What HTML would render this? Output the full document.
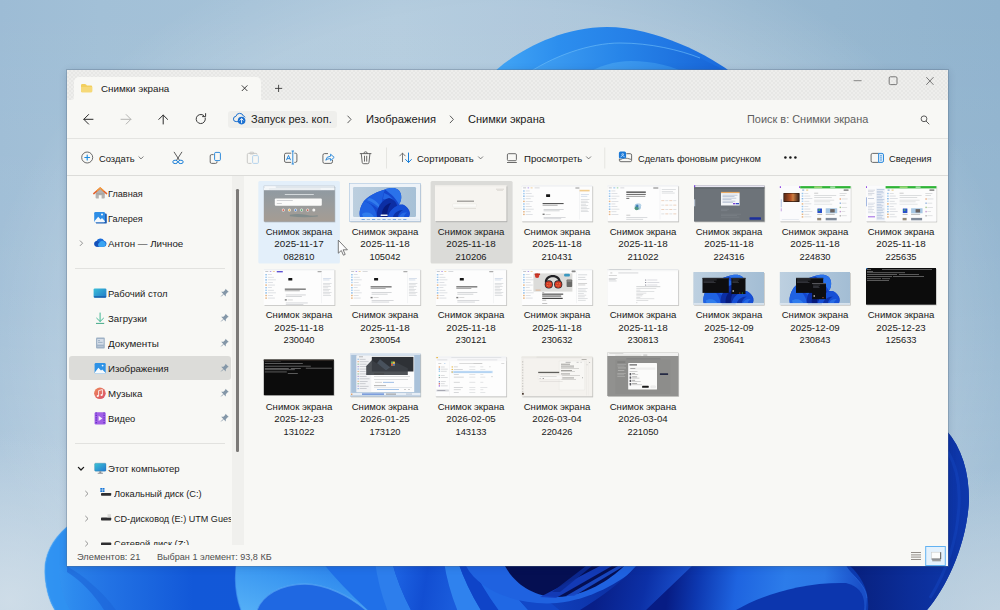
<!DOCTYPE html>
<html lang="ru"><head><meta charset="utf-8"><title>Снимки экрана</title>
<style>
html,body{margin:0;padding:0;}
body{width:1000px;height:610px;overflow:hidden;position:relative;background:#a9c3d8;font-family:"Liberation Sans",sans-serif;}
.a{position:absolute;}
.t{position:absolute;white-space:nowrap;}
.ti{display:inline-block;white-space:nowrap;transform-origin:50% 50%;}
svg{position:absolute;overflow:visible;}
#win{position:absolute;left:67px;top:70px;width:881px;height:496px;background:#f8f8f5;box-shadow:0 0 0 1px rgba(90,110,130,.32),0 1px 8px rgba(0,30,70,.16);overflow:hidden;}
</style></head><body>
<svg id="wall" width="1000" height="610" viewBox="0 0 1000 610" style="left:0;top:0">
<defs>
<linearGradient id="bg" x1="0" y1="0" x2="1" y2="0"><stop offset="0" stop-color="#9dbcd5"/><stop offset=".1" stop-color="#a2c0d7"/><stop offset=".4" stop-color="#a8c4d9"/><stop offset=".55" stop-color="#a2bfd6"/><stop offset=".75" stop-color="#99b9d1"/><stop offset="1" stop-color="#90b3ce"/></linearGradient><radialGradient id="glow" gradientUnits="userSpaceOnUse" cx="500" cy="340" r="520" gradientTransform="translate(0 340) scale(1 .8) translate(0 -340)"><stop offset="0" stop-color="#fff" stop-opacity=".15"/><stop offset=".8" stop-color="#fff" stop-opacity=".15"/><stop offset="1" stop-color="#fff" stop-opacity="0"/></radialGradient><linearGradient id="bgv" x1="0" y1="0" x2="0" y2="1"><stop offset="0" stop-color="#fff" stop-opacity="0"/><stop offset=".5" stop-color="#fff" stop-opacity=".07"/><stop offset="1" stop-color="#fff" stop-opacity=".27"/></linearGradient>
<radialGradient id="bgl" gradientUnits="userSpaceOnUse" cx="10" cy="600" r="170"><stop offset="0" stop-color="#d2dfe9" stop-opacity=".85"/><stop offset=".5" stop-color="#d2dfe9" stop-opacity=".4"/><stop offset="1" stop-color="#d2dfe9" stop-opacity="0"/></radialGradient>
<radialGradient id="bgr" gradientUnits="userSpaceOnUse" cx="1000" cy="620" r="150"><stop offset="0" stop-color="#c6d6e3" stop-opacity=".8"/><stop offset=".5" stop-color="#c6d6e3" stop-opacity=".4"/><stop offset="1" stop-color="#c6d6e3" stop-opacity="0"/></radialGradient>
<linearGradient id="ta" x1="0" y1="0" x2="1" y2="0"><stop offset="0" stop-color="#45a8f6"/><stop offset=".28" stop-color="#2c8eee"/><stop offset="1" stop-color="#1a6ade"/></linearGradient>
<linearGradient id="tb" x1="0" y1="0" x2="1" y2="0"><stop offset="0" stop-color="#43a3f3"/><stop offset=".45" stop-color="#2785e9"/><stop offset="1" stop-color="#1661d6"/></linearGradient>
<linearGradient id="tc" x1="0" y1="0" x2="1" y2="0"><stop offset="0" stop-color="#46a4f2"/><stop offset="1" stop-color="#2a84e6"/></linearGradient>
<linearGradient id="bot" x1="0" y1="0" x2="1" y2="0"><stop offset="0" stop-color="#2f8aec"/><stop offset=".07" stop-color="#2272e4"/><stop offset=".16" stop-color="#1258d8"/><stop offset=".3" stop-color="#1358d8"/><stop offset=".48" stop-color="#154fd0"/><stop offset=".62" stop-color="#0b2fa4"/><stop offset=".72" stop-color="#1146c4"/><stop offset=".88" stop-color="#0c3ab0"/><stop offset="1" stop-color="#0a2e9e"/></linearGradient>
<linearGradient id="lp" x1="0" y1="0" x2="1" y2="0"><stop offset="0" stop-color="#379af4"/><stop offset=".4" stop-color="#2d8aee"/><stop offset="1" stop-color="#2478e8"/></linearGradient>
<linearGradient id="wv" x1="0" y1="1" x2="1" y2="0"><stop offset="0" stop-color="#55b0f7"/><stop offset=".5" stop-color="#3b98f1"/><stop offset="1" stop-color="#2478e8"/></linearGradient>
<linearGradient id="rp" x1="0" y1="0" x2="1" y2="0"><stop offset="0" stop-color="#08207e"/><stop offset=".5" stop-color="#0b2d98"/><stop offset="1" stop-color="#0e38ac"/></linearGradient>
<linearGradient id="pt" gradientUnits="userSpaceOnUse" x1="670" y1="575" x2="860" y2="600"><stop offset="0" stop-color="#071c84"/><stop offset=".15" stop-color="#0d38b0"/><stop offset=".35" stop-color="#1e64e0"/><stop offset=".6" stop-color="#2c7cea"/><stop offset=".8" stop-color="#2c78e6"/><stop offset=".93" stop-color="#1f5cd2"/><stop offset="1" stop-color="#194ec6"/></linearGradient><linearGradient id="bandB" gradientUnits="userSpaceOnUse" x1="395" y1="580" x2="455" y2="590"><stop offset="0" stop-color="#1c62e2"/><stop offset=".5" stop-color="#124ed2"/><stop offset="1" stop-color="#1a5cdc"/></linearGradient><linearGradient id="bandA" gradientUnits="userSpaceOnUse" x1="600" y1="580" x2="680" y2="600"><stop offset="0" stop-color="#081f88"/><stop offset=".55" stop-color="#0c30a6"/><stop offset="1" stop-color="#1a50cc"/></linearGradient>
<clipPath id="wclip"><path d="M0 0H1000V610H0Z"/></clipPath>
</defs>
<rect width="1000" height="610" fill="url(#bg)"/>
<rect width="1000" height="610" fill="url(#bgv)"/>
<rect width="1000" height="610" fill="url(#glow)"/>
<rect width="1000" height="610" fill="url(#bgl)"/>
<rect width="1000" height="610" fill="url(#bgr)"/>
<!-- top bloom -->
<path d="M490 76 C508 57 555 27 607 27 C655 27 710 55 736 76 Z" fill="url(#ta)"/>
<path d="M524 76 C552 56 590 43 620 43 C650 43 680 50 700 58 L736 76 Z" fill="url(#tb)"/>
<path d="M524 76 C552 56 590 43 620 43 C650 43 680 50 700 58" fill="none" stroke="#6cbcf8" stroke-width="1" opacity=".65"/>
<path d="M582 76 C598 66 615 61 631 61 C652 61 674 66 692 76 Z" fill="url(#tc)"/>
<!-- bottom bloom body -->
<path d="M67 527 C52 540 44 556 45 574 C46 590 50 602 55 610 L927 610 C946 588 967 545 969 500 C969 472 962 448 946 430 L946 560 L67 560 Z" fill="url(#bot)"/>
<!-- left petal -->
<path d="M67 527 C52 540 44 556 45 574 C46 590 50 602 55 610 L116 610 C102 590 82 575 67 566 Z" fill="url(#lp)"/>
<path d="M67 527 C52 540 44 556 45 574 C46 590 50 602 55 610 L70 610 C62 596 58 580 60 562 C61 550 64 540 67 534Z" fill="#2f92f2" opacity=".75"/>
<path d="M67 566 C82 575 102 590 116 610 L104 610 C94 594 80 580 67 572Z" fill="#1a5cd4" opacity=".55"/>
<path d="M67 527 C52 540 44 556 45 574 C46 590 50 602 55 610" fill="none" stroke="#52aaf6" stroke-width="1.6" opacity=".5"/>
<!-- arch petal -->
<path d="M241 610 C236 596 234 580 237 562 L322 562 C345 578 362 596 375 610 L366 610 C350 596 325 584 305 584 C280 584 262 596 257 610 Z" fill="url(#wv)"/>
<path d="M257 610 C262 596 280 584 305 584 C325 584 350 596 366 610 Z" fill="#1f68e2"/>
<path d="M257 610 C262 596 280 584 305 584 C325 584 350 596 366 610" fill="none" stroke="#5aaaf5" stroke-width="1.4" opacity=".7"/>
<path d="M241 610 C236 596 234 580 237 562" fill="none" stroke="#4a9cf2" stroke-width="1.5" opacity=".6"/>
<!-- streaks -->
<path d="M322 562 Q343 588 370 612 L390 612 Q380 588 376 562Z" fill="#2070e8"/>
<path d="M375 562 Q378.5 588 388 612 L412 612 Q399 588 392 562Z" fill="#2d7eec"/>
<path d="M392 562 Q399 588 412 612 L458 612 Q448 588 444 562Z" fill="url(#bandB)"/>
<path d="M444 562 Q448 588 458 612 L482 612 Q467 588 458 562Z" fill="#2f82ee"/>
<path d="M458 562 Q467 588 482 612 L500 612 Q482 588 470 562Z" fill="#0f44c8"/>
<path d="M470 562 Q482 588 500 612 L530 612 Q507 588 490 562Z" fill="#2068e4"/>
<path d="M490 562 Q507 588 530 612 L562 612 Q531 588 506 562Z" fill="#1248c8"/>
<!-- U band + dark bowl -->
<path d="M466 566 C480 592 520 606 557 603 C590 600 620 582 640 566 L505 566Z" fill="#1f62e0"/>
<path d="M505 566 C515 585 535 597 557 597 C585 596 610 580 624 566 Z" fill="#050f52"/>
<path d="M540 597 L600 566 L612 566 L556 598Z" fill="#153fc0" opacity=".9"/>
<path d="M552 592 L586 566 L592 566 L560 592Z" fill="#0c2a94" opacity=".9"/>
<path d="M566 596 L618 566 L624 566 L574 596Z" fill="#1a4ccc" opacity=".9"/>
<!-- right medium region & diagonal -->
<path d="M636 566 L694 566 L648 610 L580 610 C600 598 622 582 636 566Z" fill="url(#bandA)"/>
<!-- big petal right -->
<path d="M692 566 L846 566 C850 574 866 584 867 598 L866 610 L646 610 Z" fill="url(#pt)"/>
<path d="M736 610 C760 596 800 582 846 583 C858 586 866 594 864 610 Z" fill="#0c36ae"/>
<path d="M846 566 C850 574 866 584 867 598" fill="none" stroke="#2a6ade" stroke-width="1" opacity=".6"/>
<!-- right petal -->
<path d="M946 430 C962 448 969 472 969 500 C967 545 946 588 927 610 L868 610 C870 590 860 575 850 566 L946 566 Z" fill="url(#rp)"/>
<path d="M948 452 C957 467 960 486 959 506 C957 540 946 572 930 598" fill="none" stroke="#1444be" stroke-width="3" opacity=".55"/>
</svg>
<div id="win"></div>
<div id="ui" class="a" style="left:0;top:0;width:1000px;height:610px">
<div class="a" style="left:67px;top:70px;width:881px;height:30.400px;background:repeating-conic-gradient(#e7e7e5 0 25%,#eeeeec 0 50%) 0 0/4px 4px"></div>
<div class="a" style="left:74px;top:77px;width:186.500px;height:23.500px;background:#f8f8f5;border-radius:5px 5px 0 0"></div>
<svg width="1000" height="610" viewBox="0 0 1000 610" style="left:0;top:0"><path d="M70.500 100.300 q3.500 0 3.500 -3.500 v3.500z M264 100.300 q-3.500 0 -3.500 -3.500 v3.500z" fill="#f8f8f5"/></svg>
<div class="t" id="t0" style="top:82.67px;font-size:9.6px;line-height:12px;color:#1a1a1a;left:100.55px;transform-origin:0 50%;transform:scaleX(1.0223);">Снимки экрана</div>
<div class="a" style="left:67px;top:138px;width:881px;height:1px;background:#e4e4e1"></div>
<div class="a" style="left:67px;top:175px;width:881px;height:1px;background:#dcdcd9"></div>
<div class="a" style="left:228px;top:110.500px;width:109px;height:17.200px;background:#efefec;border-radius:3px"></div>
<div class="t" id="t1" style="top:113.36px;font-size:10.8px;line-height:13px;color:#1a1a1a;left:251.35px;transform-origin:0 50%;transform:scaleX(1.0189);">Запуск рез. коп.</div>
<div class="t" id="t2" style="top:113.36px;font-size:10.8px;line-height:13px;color:#1a1a1a;left:365.95px;transform-origin:0 50%;transform:scaleX(1.0330);">Изображения</div>
<div class="t" id="t3" style="top:113.36px;font-size:10.8px;line-height:13px;color:#1a1a1a;left:467.75px;transform-origin:0 50%;transform:scaleX(1.0228);">Снимки экрана</div>
<div class="t" id="t4" style="top:113.36px;font-size:10.8px;line-height:13px;color:#5e5e5e;left:747.35px;transform-origin:0 50%;transform:scaleX(1.0122);">Поиск в: Снимки экрана</div>
<div class="t" id="t5" style="top:152.64px;font-size:9.4px;line-height:11px;color:#1a1a1a;left:99.15px;transform-origin:0 50%;transform:scaleX(0.9989);">Создать</div>
<div class="t" id="t6" style="top:152.64px;font-size:9.4px;line-height:11px;color:#1a1a1a;left:417.35px;transform-origin:0 50%;transform:scaleX(1.0140);">Сортировать</div>
<div class="t" id="t7" style="top:152.64px;font-size:9.4px;line-height:11px;color:#1a1a1a;left:524.15px;transform-origin:0 50%;transform:scaleX(1.0262);">Просмотреть</div>
<div class="t" id="t8" style="top:152.64px;font-size:9.4px;line-height:11px;color:#1a1a1a;left:637.65px;transform-origin:0 50%;transform:scaleX(0.9889);">Сделать фоновым рисунком</div>
<div class="t" id="t9" style="top:152.84px;font-size:9.4px;line-height:11px;color:#1a1a1a;left:889.05px;transform-origin:0 50%;transform:scaleX(0.9923);">Сведения</div>
<div class="t" id="t10" style="top:550.64px;font-size:9.4px;line-height:11px;color:#4f4f4f;left:76.85px;transform-origin:0 50%;transform:scaleX(0.9895);">Элементов: 21</div>
<div class="t" id="t11" style="top:550.64px;font-size:9.4px;line-height:11px;color:#4f4f4f;left:156.75px;transform-origin:0 50%;transform:scaleX(0.9682);">Выбран 1 элемент: 93,8 КБ</div>
<div class="a" style="left:231.700px;top:176px;width:12px;height:369.300px;background:#f0f0ed"></div>
<div class="a" style="left:236.400px;top:189px;width:2.600px;height:263px;background:#7c7a78;border-radius:1.300px"></div>
<div class="a" style="left:69px;top:355.800px;width:161.800px;height:24.600px;background:#dcdcd9;border-radius:3px"></div>
<div class="a" style="left:75px;top:268px;width:150px;height:1px;background:#e2e2df"></div>
<div class="a" style="left:75px;top:443px;width:150px;height:1px;background:#e2e2df"></div>
<div class="t" id="t12" style="top:188.44px;font-size:9.4px;line-height:11px;color:#1a1a1a;left:107.95px;transform-origin:0 50%;transform:scaleX(0.9723);">Главная</div>
<div class="t" id="t13" style="top:213.34px;font-size:9.4px;line-height:11px;color:#1a1a1a;left:107.95px;transform-origin:0 50%;transform:scaleX(0.9651);">Галерея</div>
<div class="t" id="t14" style="top:238.14px;font-size:9.4px;line-height:11px;color:#1a1a1a;left:107.95px;transform-origin:0 50%;transform:scaleX(1.0388);">Антон — Личное</div>
<div class="t" id="t15" style="top:287.94px;font-size:9.4px;line-height:11px;color:#1a1a1a;left:107.95px;transform-origin:0 50%;transform:scaleX(1.0126);">Рабочий стол</div>
<div class="t" id="t16" style="top:312.94px;font-size:9.4px;line-height:11px;color:#1a1a1a;left:107.95px;transform-origin:0 50%;transform:scaleX(1.0282);">Загрузки</div>
<div class="t" id="t17" style="top:338.44px;font-size:9.4px;line-height:11px;color:#1a1a1a;left:107.95px;transform-origin:0 50%;transform:scaleX(1.0532);">Документы</div>
<div class="t" id="t18" style="top:363.24px;font-size:9.4px;line-height:11px;color:#1a1a1a;left:107.95px;transform-origin:0 50%;transform:scaleX(1.0285);">Изображения</div>
<div class="t" id="t19" style="top:388.04px;font-size:9.4px;line-height:11px;color:#1a1a1a;left:107.95px;transform-origin:0 50%;transform:scaleX(1.0370);">Музыка</div>
<div class="t" id="t20" style="top:413.04px;font-size:9.4px;line-height:11px;color:#1a1a1a;left:107.95px;transform-origin:0 50%;transform:scaleX(0.9967);">Видео</div>
<div class="t" id="t21" style="top:463.34px;font-size:9.4px;line-height:11px;color:#1a1a1a;left:108.15px;transform-origin:0 50%;transform:scaleX(1.0213);">Этот компьютер</div>
<div class="t" id="t22" style="top:488.44px;font-size:9.4px;line-height:11px;color:#1a1a1a;left:113.85px;transform-origin:0 50%;transform:scaleX(0.9883);">Локальный диск (C:)</div>
<div class="a" style="left:110px;top:508px;width:121px;height:20px;overflow:hidden">
<div class="t" id="t23" style="top:5.24px;font-size:9.4px;line-height:11px;color:#1a1a1a;left:3.85px;transform-origin:0 50%;transform:scaleX(0.9682);">CD-дисковод (E:) UTM Guest</div>
</div>
<svg width="1000" height="610" viewBox="0 0 1000 610" style="left:0;top:0"><rect x="258.3" y="181.0" width="81.6" height="82.6" fill="#e3effa" rx="1.5"/><rect x="430.6" y="181.0" width="82.0" height="82.6" fill="#dbdbd8" rx="1.5"/><rect x="264.6" y="186.7" width="70.8" height="35.7" fill="#000" rx="0.5" opacity="0.16"/><rect x="264.1" y="186.2" width="70.8" height="35.7" fill="#000" rx="0.5" opacity="0.14"/><linearGradient id="g1" x1="0" y1="0" x2="0" y2="1"><stop offset="0" stop-color="#8d99a3"/><stop offset=".55" stop-color="#9a9c9c"/><stop offset="1" stop-color="#a59c93"/></linearGradient><rect x="263.8" y="185.8" width="70.8" height="35.7" fill="url(#g1)"/><rect x="263.8" y="185.8" width="70.8" height="2.2" fill="#dfe6ec"/><rect x="263.8" y="188.0" width="70.8" height="2.2" fill="#f3f6f8"/><rect x="264.8" y="186.2" width="11.0" height="1.8" fill="#f6f8fa" rx="0.5"/><rect x="268.8" y="188.5" width="52.0" height="1.1" fill="#e2e6ea" rx="0.5"/><rect x="284.8" y="194.0" width="29.0" height="1.0" fill="#e8ecef" opacity="0.75"/><rect x="274.8" y="198.4" width="47.0" height="7.4" fill="#fbfbfa" rx="1"/><rect x="276.8" y="200.0" width="16.0" height="0.8" fill="#b0b4b8" opacity="0.7"/><rect x="276.8" y="203.0" width="5.0" height="0.8" fill="#a0a4a8" opacity="0.6"/><circle cx="283.3" cy="210.1" r="1.5" fill="#f4f4f2"/><circle cx="283.3" cy="210.1" r="0.9" fill="#d8584a"/><circle cx="289.4" cy="210.1" r="1.5" fill="#f4f4f2"/><circle cx="289.4" cy="210.1" r="0.9" fill="#f0b040"/><circle cx="295.5" cy="210.1" r="1.5" fill="#f4f4f2"/><circle cx="295.5" cy="210.1" r="0.9" fill="#3b78d8"/><circle cx="301.6" cy="210.1" r="1.5" fill="#f4f4f2"/><circle cx="301.6" cy="210.1" r="0.9" fill="#4aa060"/><circle cx="307.7" cy="210.1" r="1.5" fill="#f4f4f2"/><circle cx="307.7" cy="210.1" r="0.9" fill="#c05040"/><circle cx="313.8" cy="210.1" r="1.5" fill="#f4f4f2"/><circle cx="313.8" cy="210.1" r="0.9" fill="#f0f0f0"/><path d="M289.8 214.8 q8 -1.5 16 0 q6 1.5 12 0.5 l0 1.2 q-14 1.5 -28 -0.2z" fill="#5a7a80" opacity=".45"/><rect x="350.4" y="184.5" width="70.8" height="37.9" fill="#000" rx="0.5" opacity="0.16"/><rect x="349.9" y="184.0" width="70.8" height="37.9" fill="#000" rx="0.5" opacity="0.14"/><rect x="349.6" y="183.6" width="70.8" height="37.9" fill="#eef3f8"/><rect x="349.6" y="183.6" width="70.8" height="37.9" fill="none" stroke="#a9c4e0" stroke-width=".6"/><linearGradient id="g2" x1="0" y1="0" x2="1" y2="0"><stop offset="0" stop-color="#bccfdf"/><stop offset="1" stop-color="#a6c0d6"/></linearGradient><rect x="353.0" y="187.0" width="63.0" height="30.0" fill="url(#g2)" rx="1.2"/><clipPath id="c2"><rect x="353.0" y="187.0" width="63" height="30"/></clipPath><g clip-path="url(#c2)"><g transform="translate(385.0 217.0) scale(1.000)"><path d="M-25 0 C-26 -5 -25 -10 -21 -16 C-16 -22 -6 -26 0 -27.600 C4 -29 10 -30 14 -26.600 C17 -23 17 -17 14 -12.500 C18 -13 22 -11 24 -7 C25.500 -4 25 -2 24 0 Z" fill="#1446cc"/><path d="M-25 0 C-26 -5 -25 -10 -21 -16 C-14 -14 -9 -8 -8 0 Z" fill="#1f62e2"/><path d="M-23 -3 C-18 -6 -13 -4 -11 0 L-22 0Z" fill="#3584f0" opacity=".8"/><path d="M-21 -16 C-16 -22 -6 -26 0 -27.600 C-3 -20 -4 -12 -2 -4 C-8 -10 -14 -14 -21 -16Z" fill="#1d5ee0"/><path d="M-16 -19 C-10 -18 -5 -13 -4 -7 C-8 -12 -12 -15 -18 -17Z" fill="#3a86f0" opacity=".75"/><path d="M0 -27.600 C4 -29 10 -30 14 -26.600 C17 -23 17 -17 14 -12.500 C11 -19 6 -23 0 -27.600Z" fill="#2a72ea"/><path d="M-1 -24 C5 -22 10 -17 11 -11 C7 -15 2 -18 -2 -18Z" fill="#2468e6" opacity=".9"/><path d="M-8 0 C-9 -8 -4 -17 4 -19 C9 -18 12 -14 12 -11 C6 -8 4 -4 3 0 Z" fill="#0c2ea4"/><path d="M-3 0 C-4 -7 0 -13 6 -14 C3 -10 2 -5 2 0Z" fill="#071a78" opacity=".9"/><path d="M3 0 C4 -6 10 -12 18 -12.500 C22 -11 25 -6 24 0Z" fill="#1650d6"/><path d="M8 0 C9 -4 13 -7 18 -7 C15 -5 13 -3 13 0Z" fill="#0b2c9e" opacity=".85"/><path d="M14 0 C15 -3 18 -5 22 -4.500 C20 -3 19 -1.500 19 0Z" fill="#2a70e8" opacity=".8"/></g></g><rect x="380.6" y="214.6" width="7.0" height="1.3" fill="#eef2f6" rx="0.5"/><rect x="350.6" y="218.8" width="68.8" height="1.6" fill="#e4ecf4"/><rect x="361.6" y="219.1" width="3.2" height="0.9" fill="#4a88d8" opacity="0.8"/><rect x="366.8" y="219.1" width="3.2" height="0.9" fill="#8aa8c8" opacity="0.8"/><rect x="372.0" y="219.1" width="3.2" height="0.9" fill="#4a88d8" opacity="0.8"/><rect x="377.2" y="219.1" width="3.2" height="0.9" fill="#8aa8c8" opacity="0.8"/><rect x="382.4" y="219.1" width="3.2" height="0.9" fill="#4a88d8" opacity="0.8"/><rect x="387.6" y="219.1" width="3.2" height="0.9" fill="#8aa8c8" opacity="0.8"/><rect x="392.8" y="219.1" width="3.2" height="0.9" fill="#4a88d8" opacity="0.8"/><rect x="398.0" y="219.1" width="3.2" height="0.9" fill="#8aa8c8" opacity="0.8"/><rect x="403.2" y="219.1" width="3.2" height="0.9" fill="#4a88d8" opacity="0.8"/><rect x="435.8" y="186.2" width="71.6" height="36.0" fill="#000" rx="0.5" opacity="0.16"/><rect x="435.3" y="185.7" width="71.6" height="36.0" fill="#000" rx="0.5" opacity="0.14"/><rect x="435.0" y="185.3" width="71.6" height="36.0" fill="#f6f4f0"/><rect x="435.0" y="185.3" width="71.6" height="1.2" fill="#efede9"/><rect x="496.0" y="188.8" width="8.0" height="0.7" fill="#b8b4ae" opacity="0.6"/><rect x="497.0" y="190.3" width="6.0" height="0.6" fill="#c4c0ba" opacity="0.6"/><rect x="457.0" y="200.7" width="17.0" height="0.9" fill="#4a4845" opacity="0.75"/><rect x="452.5" y="203.8" width="24.0" height="3.2" fill="#fbfaf8" rx="1" stroke="#e6e3de" stroke-width=".4"/><rect x="454.0" y="208.1" width="22.0" height="0.6" fill="#c8c4be" opacity="0.7"/><rect x="522.4" y="186.2" width="70.8" height="36.2" fill="#000" rx="0.5" opacity="0.16"/><rect x="521.9" y="185.7" width="70.8" height="36.2" fill="#000" rx="0.5" opacity="0.14"/><rect x="521.6" y="185.3" width="70.8" height="36.2" fill="#fdfdfd"/><rect x="521.6" y="185.3" width="70.8" height="1.3" fill="#eef0f2"/><rect x="523.1" y="187.5" width="3.0" height="0.8" fill="#8a8f98" opacity="0.6"/><rect x="527.6" y="187.5" width="1.5" height="0.8" fill="#7a50e0" opacity="0.7"/><rect x="530.6" y="187.5" width="2.0" height="0.8" fill="#e0a040" opacity="0.6"/><rect x="534.6" y="187.5" width="5.0" height="0.8" fill="#b0b4ba" opacity="0.6"/><rect x="575.4" y="187.5" width="4.0" height="1.0" fill="#555" opacity="0.6"/><rect x="523.1" y="190.3" width="1.6" height="1.4" fill="#7db7ea" opacity="0.8"/><rect x="525.7" y="190.6" width="4.0" height="0.7" fill="#c8ccd2" opacity="0.8"/><rect x="523.1" y="192.9" width="1.6" height="1.4" fill="#8cc0ee" opacity="0.8"/><rect x="525.7" y="193.2" width="6.0" height="0.7" fill="#c8ccd2" opacity="0.8"/><rect x="523.1" y="195.5" width="1.6" height="1.4" fill="#6aa9e4" opacity="0.8"/><rect x="525.7" y="195.8" width="8.0" height="0.7" fill="#c8ccd2" opacity="0.8"/><rect x="523.1" y="198.1" width="1.6" height="1.4" fill="#9cc8f0" opacity="0.8"/><rect x="525.7" y="198.4" width="5.0" height="0.7" fill="#c8ccd2" opacity="0.8"/><rect x="523.1" y="200.7" width="1.6" height="1.4" fill="#e0a060" opacity="0.8"/><rect x="525.7" y="201.0" width="7.0" height="0.7" fill="#c8ccd2" opacity="0.8"/><rect x="523.1" y="203.3" width="1.6" height="1.4" fill="#7db7ea" opacity="0.8"/><rect x="525.7" y="203.6" width="4.0" height="0.7" fill="#c8ccd2" opacity="0.8"/><rect x="523.1" y="205.9" width="1.6" height="1.4" fill="#8cc0ee" opacity="0.8"/><rect x="525.7" y="206.2" width="6.0" height="0.7" fill="#c8ccd2" opacity="0.8"/><rect x="523.1" y="208.5" width="1.6" height="1.4" fill="#6aa9e4" opacity="0.8"/><rect x="525.7" y="208.8" width="8.0" height="0.7" fill="#c8ccd2" opacity="0.8"/><rect x="523.1" y="211.1" width="1.6" height="1.4" fill="#e0a060" opacity="0.8"/><rect x="525.7" y="211.4" width="5.0" height="0.7" fill="#c8ccd2" opacity="0.8"/><rect x="523.1" y="213.7" width="1.6" height="1.4" fill="#e0a060" opacity="0.8"/><rect x="525.7" y="214.0" width="7.0" height="0.7" fill="#c8ccd2" opacity="0.8"/><rect x="546.1" y="194.3" width="4.0" height="2.6" fill="#161616" rx="0.3"/><rect x="542.6" y="203.0" width="21.0" height="1.1" fill="#2a2a2a" opacity="0.8"/><rect x="542.6" y="204.8" width="15.0" height="0.8" fill="#555" opacity="0.6"/><rect x="543.6" y="209.0" width="20.0" height="0.7" fill="#8a8f96" opacity="0.5"/><rect x="543.6" y="210.5" width="16.0" height="0.7" fill="#8a8f96" opacity="0.5"/><rect x="542.6" y="213.6" width="2.0" height="1.4" fill="#444" opacity="0.7"/><rect x="545.6" y="214.0" width="5.0" height="0.7" fill="#999" opacity="0.5"/><rect x="543.6" y="217.0" width="22.0" height="0.7" fill="#8a8f96" opacity="0.45"/><rect x="543.6" y="218.4" width="17.6" height="0.7" fill="#8a8f96" opacity="0.45"/><rect x="579.4" y="189.3" width="0.4" height="30.2" fill="#e4e6e8"/><rect x="580.9" y="194.3" width="8.0" height="0.7" fill="#9ab0d0" opacity="0.55"/><rect x="580.9" y="195.9" width="6.4" height="0.7" fill="#9ab0d0" opacity="0.55"/><rect x="580.9" y="199.3" width="8.5" height="0.7" fill="#a8acb2" opacity="0.5"/><rect x="580.9" y="200.8" width="6.8" height="0.7" fill="#a8acb2" opacity="0.5"/><rect x="580.9" y="202.3" width="7.8" height="0.7" fill="#a8acb2" opacity="0.5"/><rect x="580.9" y="203.8" width="5.1" height="0.7" fill="#a8acb2" opacity="0.5"/><rect x="580.9" y="205.3" width="7.2" height="0.7" fill="#a8acb2" opacity="0.5"/><rect x="580.9" y="206.8" width="5.9" height="0.7" fill="#a8acb2" opacity="0.5"/><rect x="580.9" y="208.3" width="8.5" height="0.7" fill="#a8acb2" opacity="0.5"/><rect x="580.9" y="209.8" width="6.8" height="0.7" fill="#a8acb2" opacity="0.5"/><rect x="580.9" y="211.3" width="7.8" height="0.7" fill="#a8acb2" opacity="0.5"/><rect x="579.6" y="189.8" width="10.0" height="1.6" fill="#f0c070" opacity="0.8"/><rect x="608.1" y="186.2" width="71.0" height="36.2" fill="#000" rx="0.5" opacity="0.16"/><rect x="607.6" y="185.7" width="71.0" height="36.2" fill="#000" rx="0.5" opacity="0.14"/><rect x="607.3" y="185.3" width="71.0" height="36.2" fill="#fdfdfd"/><rect x="607.3" y="185.3" width="71.0" height="1.3" fill="#eef0f2"/><rect x="608.8" y="187.5" width="3.0" height="0.8" fill="#8a8f98" opacity="0.6"/><rect x="613.3" y="187.5" width="2.0" height="0.8" fill="#3a90e0" opacity="0.7"/><rect x="616.8" y="187.5" width="1.5" height="0.8" fill="#40b050" opacity="0.7"/><rect x="620.3" y="187.5" width="4.0" height="0.8" fill="#b0b4ba" opacity="0.6"/><rect x="653.3" y="187.5" width="5.0" height="1.0" fill="#444" opacity="0.7"/><rect x="608.8" y="190.3" width="1.6" height="1.4" fill="#7db7ea" opacity="0.8"/><rect x="611.4" y="190.6" width="4.0" height="0.7" fill="#c8ccd2" opacity="0.8"/><rect x="608.8" y="192.9" width="1.6" height="1.4" fill="#8cc0ee" opacity="0.8"/><rect x="611.4" y="193.2" width="6.0" height="0.7" fill="#c8ccd2" opacity="0.8"/><rect x="608.8" y="195.5" width="1.6" height="1.4" fill="#6aa9e4" opacity="0.8"/><rect x="611.4" y="195.8" width="8.0" height="0.7" fill="#c8ccd2" opacity="0.8"/><rect x="608.8" y="198.1" width="1.6" height="1.4" fill="#9cc8f0" opacity="0.8"/><rect x="611.4" y="198.4" width="5.0" height="0.7" fill="#c8ccd2" opacity="0.8"/><rect x="608.8" y="200.7" width="1.6" height="1.4" fill="#e0a060" opacity="0.8"/><rect x="611.4" y="201.0" width="7.0" height="0.7" fill="#c8ccd2" opacity="0.8"/><rect x="608.8" y="203.3" width="1.6" height="1.4" fill="#7db7ea" opacity="0.8"/><rect x="611.4" y="203.6" width="4.0" height="0.7" fill="#c8ccd2" opacity="0.8"/><rect x="608.8" y="205.9" width="1.6" height="1.4" fill="#8cc0ee" opacity="0.8"/><rect x="611.4" y="206.2" width="6.0" height="0.7" fill="#c8ccd2" opacity="0.8"/><rect x="608.8" y="208.5" width="1.6" height="1.4" fill="#6aa9e4" opacity="0.8"/><rect x="611.4" y="208.8" width="8.0" height="0.7" fill="#c8ccd2" opacity="0.8"/><rect x="608.8" y="211.1" width="1.6" height="1.4" fill="#e0a060" opacity="0.8"/><rect x="611.4" y="211.4" width="5.0" height="0.7" fill="#c8ccd2" opacity="0.8"/><rect x="608.8" y="213.7" width="1.6" height="1.4" fill="#e0a060" opacity="0.8"/><rect x="611.4" y="214.0" width="7.0" height="0.7" fill="#c8ccd2" opacity="0.8"/><rect x="626.3" y="191.5" width="19.5" height="1.3" fill="#222" opacity="0.85"/><rect x="626.3" y="193.9" width="19.5" height="1.1" fill="#444" opacity="0.75"/><rect x="626.3" y="195.9" width="19.0" height="0.9" fill="#555" opacity="0.6"/><rect x="626.3" y="197.9" width="3.0" height="1.0" fill="#333" opacity="0.7"/><circle cx="637.8" cy="206.8" r="3.2" fill="#8ab8d8" opacity="0.8"/><circle cx="636.6" cy="208.3" r="2.0" fill="#3a8a6a" opacity="0.8"/><circle cx="639.5" cy="205.3" r="1.8" fill="#b8d4e8" opacity="0.9"/><circle cx="637.3" cy="205.9" r="1.2" fill="#2a6ab0" opacity="0.8"/><rect x="626.3" y="214.8" width="4.0" height="0.7" fill="#888" opacity="0.6"/><rect x="626.3" y="217.3" width="21.0" height="0.7" fill="#9aa0a8" opacity="0.5"/><rect x="626.3" y="218.9" width="16.8" height="0.7" fill="#9aa0a8" opacity="0.5"/><rect x="659.8" y="187.3" width="0.4" height="32.2" fill="#e4e6e8"/><rect x="661.8" y="189.3" width="14.0" height="0.7" fill="#a8acb2" opacity="0.5"/><rect x="661.8" y="191.0" width="11.2" height="0.7" fill="#a8acb2" opacity="0.5"/><rect x="661.8" y="192.7" width="12.9" height="0.7" fill="#a8acb2" opacity="0.5"/><rect x="661.3" y="200.3" width="3.0" height="0.8" fill="#e0b090" opacity="0.7"/><rect x="665.3" y="200.3" width="3.0" height="0.8" fill="#c8ccd0" opacity="0.7"/><rect x="669.3" y="200.3" width="3.0" height="0.8" fill="#e0b090" opacity="0.7"/><rect x="673.3" y="200.3" width="3.0" height="0.8" fill="#c8ccd0" opacity="0.7"/><rect x="661.3" y="204.7" width="3.0" height="0.8" fill="#c8ccd0" opacity="0.7"/><rect x="665.3" y="204.7" width="3.0" height="0.8" fill="#e0b090" opacity="0.7"/><rect x="669.3" y="204.7" width="3.0" height="0.8" fill="#c8ccd0" opacity="0.7"/><rect x="673.3" y="204.7" width="3.0" height="0.8" fill="#e0b090" opacity="0.7"/><rect x="661.3" y="209.1" width="3.0" height="0.8" fill="#e0b090" opacity="0.7"/><rect x="665.3" y="209.1" width="3.0" height="0.8" fill="#c8ccd0" opacity="0.7"/><rect x="669.3" y="209.1" width="3.0" height="0.8" fill="#e0b090" opacity="0.7"/><rect x="673.3" y="209.1" width="3.0" height="0.8" fill="#c8ccd0" opacity="0.7"/><rect x="661.3" y="213.5" width="3.0" height="0.8" fill="#c8ccd0" opacity="0.7"/><rect x="665.3" y="213.5" width="3.0" height="0.8" fill="#e0b090" opacity="0.7"/><rect x="669.3" y="213.5" width="3.0" height="0.8" fill="#c8ccd0" opacity="0.7"/><rect x="673.3" y="213.5" width="3.0" height="0.8" fill="#e0b090" opacity="0.7"/><rect x="694.8" y="186.2" width="70.4" height="36.2" fill="#000" rx="0.5" opacity="0.16"/><rect x="694.3" y="185.7" width="70.4" height="36.2" fill="#000" rx="0.5" opacity="0.14"/><rect x="694.0" y="185.3" width="70.4" height="36.2" fill="#6d7379"/><rect x="694.0" y="185.3" width="70.4" height="2.0" fill="#e8e6f2"/><rect x="694.0" y="185.3" width="1.2" height="2.0" fill="#7a40e0"/><rect x="694.0" y="187.3" width="70.4" height="1.2" fill="#5d6369"/><rect x="721.0" y="191.9" width="18.6" height="1.2" fill="#e8a860"/><rect x="721.0" y="193.1" width="18.6" height="12.4" fill="#f4f6f8"/><rect x="722.5" y="194.8" width="15.0" height="0.7" fill="#8090b0" opacity="0.6"/><rect x="722.5" y="196.3" width="12.0" height="0.7" fill="#8090b0" opacity="0.6"/><rect x="722.5" y="197.8" width="13.8" height="0.7" fill="#8090b0" opacity="0.6"/><rect x="722.5" y="199.3" width="9.0" height="0.7" fill="#8090b0" opacity="0.6"/><rect x="722.5" y="200.8" width="12.8" height="0.7" fill="#8090b0" opacity="0.6"/><rect x="722.5" y="202.3" width="10.5" height="0.7" fill="#8090b0" opacity="0.6"/><rect x="733.0" y="203.1" width="2.5" height="1.2" fill="#7030d0"/><rect x="736.0" y="203.1" width="3.0" height="1.2" fill="#2040c0"/><rect x="721.0" y="208.8" width="8.0" height="0.7" fill="#8a9098" opacity="0.6"/><rect x="721.0" y="210.4" width="6.4" height="0.7" fill="#8a9098" opacity="0.6"/><rect x="721.0" y="213.8" width="20.0" height="0.7" fill="#858b92" opacity="0.55"/><rect x="721.0" y="215.3" width="16.0" height="0.7" fill="#858b92" opacity="0.55"/><rect x="721.0" y="216.8" width="18.4" height="0.7" fill="#858b92" opacity="0.55"/><rect x="749.5" y="217.3" width="11.5" height="2.4" fill="#1c2f9c" rx="0.4"/><rect x="694.0" y="199.3" width="1.2" height="7.0" fill="#c8d4e4" opacity="0.8"/><rect x="780.6" y="186.2" width="70.8" height="36.2" fill="#000" rx="0.5" opacity="0.16"/><rect x="780.1" y="185.7" width="70.8" height="36.2" fill="#000" rx="0.5" opacity="0.14"/><rect x="779.8" y="185.3" width="70.8" height="36.2" fill="#fbfbfc"/><rect x="779.8" y="186.3" width="1.2" height="1.6" fill="#8a40e0"/><rect x="799.0" y="186.3" width="1.2" height="1.6" fill="#8a40e0"/><linearGradient id="g7" x1="0" y1="0" x2="1" y2="0"><stop offset="0" stop-color="#5a2a18"/><stop offset=".45" stop-color="#c85a28"/><stop offset=".6" stop-color="#e08a48"/><stop offset="1" stop-color="#3a2018"/></linearGradient><rect x="783.4" y="192.9" width="16.2" height="9.0" fill="#2a1810" rx="0.4"/><rect x="784.0" y="193.5" width="15.0" height="7.8" fill="url(#g7)" rx="0.3" opacity="0.9"/><rect x="780.8" y="199.3" width="0.8" height="8.0" fill="#7090d0" opacity="0.7"/><rect x="780.8" y="208.3" width="0.8" height="3.0" fill="#9a60d0" opacity="0.7"/><rect x="781.8" y="219.3" width="17.0" height="0.6" fill="#c8d0e0" opacity="0.7"/><rect x="800.2" y="185.3" width="50.4" height="36.2" fill="#fcfcfc"/><rect x="800.2" y="186.1" width="50.4" height="2.3" fill="#2fb436"/><rect x="814.2" y="186.6" width="8.0" height="1.1" fill="#e8f0a0" opacity="0.8"/><rect x="830.2" y="186.6" width="5.0" height="1.1" fill="#f4fff4" opacity="0.8"/><rect x="802.2" y="189.5" width="2.0" height="1.2" fill="#4a80c0" opacity="0.6"/><rect x="806.2" y="189.5" width="2.0" height="1.2" fill="#e0b040" opacity="0.6"/><rect x="843.6" y="189.3" width="5.0" height="1.6" fill="#6a6a6a" rx="0.4" opacity="0.7"/><rect x="801.7" y="192.8" width="1.6" height="1.4" fill="#7db7ea" opacity="0.8"/><rect x="804.3" y="193.1" width="4.0" height="0.7" fill="#c8ccd2" opacity="0.8"/><rect x="801.7" y="195.4" width="1.6" height="1.4" fill="#8cc0ee" opacity="0.8"/><rect x="804.3" y="195.7" width="6.0" height="0.7" fill="#c8ccd2" opacity="0.8"/><rect x="801.7" y="198.0" width="1.6" height="1.4" fill="#6aa9e4" opacity="0.8"/><rect x="804.3" y="198.3" width="8.0" height="0.7" fill="#c8ccd2" opacity="0.8"/><rect x="801.7" y="200.6" width="1.6" height="1.4" fill="#9cc8f0" opacity="0.8"/><rect x="804.3" y="200.9" width="5.0" height="0.7" fill="#c8ccd2" opacity="0.8"/><rect x="801.7" y="203.2" width="1.6" height="1.4" fill="#e0a060" opacity="0.8"/><rect x="804.3" y="203.5" width="7.0" height="0.7" fill="#c8ccd2" opacity="0.8"/><rect x="801.7" y="205.8" width="1.6" height="1.4" fill="#7db7ea" opacity="0.8"/><rect x="804.3" y="206.1" width="4.0" height="0.7" fill="#c8ccd2" opacity="0.8"/><rect x="801.7" y="208.4" width="1.6" height="1.4" fill="#8cc0ee" opacity="0.8"/><rect x="804.3" y="208.7" width="6.0" height="0.7" fill="#c8ccd2" opacity="0.8"/><rect x="801.7" y="211.0" width="1.6" height="1.4" fill="#6aa9e4" opacity="0.8"/><rect x="804.3" y="211.3" width="8.0" height="0.7" fill="#c8ccd2" opacity="0.8"/><rect x="801.7" y="213.6" width="1.6" height="1.4" fill="#e0a060" opacity="0.8"/><rect x="804.3" y="213.9" width="5.0" height="0.7" fill="#c8ccd2" opacity="0.8"/><rect x="801.7" y="216.2" width="1.6" height="1.4" fill="#e0a060" opacity="0.8"/><rect x="804.3" y="216.5" width="7.0" height="0.7" fill="#c8ccd2" opacity="0.8"/><rect x="814.2" y="192.8" width="4.0" height="0.7" fill="#888" opacity="0.6"/><rect x="814.2" y="195.3" width="22.0" height="0.7" fill="#a0a4a8" opacity="0.5"/><rect x="814.2" y="197.0" width="17.6" height="0.7" fill="#a0a4a8" opacity="0.5"/><rect x="814.2" y="199.8" width="20.0" height="0.7" fill="#a8acb0" opacity="0.45"/><rect x="814.2" y="201.5" width="16.0" height="0.7" fill="#a8acb0" opacity="0.45"/><rect x="814.2" y="203.8" width="18.0" height="0.7" fill="#a8acb0" opacity="0.4"/><rect x="817.4" y="208.5" width="4.6" height="4.6" fill="#2a50c8" rx="0.3"/><rect x="818.4" y="209.3" width="1.6" height="1.6" fill="#50b860"/><rect x="825.7" y="208.3" width="11.5" height="5.0" fill="#a8c8e4" rx="0.3"/><rect x="830.2" y="209.1" width="4.5" height="3.4" fill="#5a4a40" opacity="0.8"/><rect x="817.2" y="213.9" width="5.0" height="0.8" fill="#777" opacity="0.6"/><rect x="825.7" y="213.9" width="9.0" height="0.8" fill="#777" opacity="0.6"/><rect x="817.2" y="217.9" width="4.0" height="2.4" fill="#6a5a40" opacity="0.7"/><rect x="825.7" y="217.9" width="11.0" height="2.4" fill="#4a5a70" opacity="0.7"/><rect x="839.6" y="193.3" width="7.0" height="0.7" fill="#a0a4a8" opacity="0.5"/><rect x="839.6" y="195.0" width="5.6" height="0.7" fill="#a0a4a8" opacity="0.5"/><rect x="839.6" y="198.3" width="1.4" height="1.4" fill="#e08040" opacity="0.7"/><rect x="839.6" y="202.5" width="1.4" height="1.4" fill="#6090d0" opacity="0.7"/><rect x="839.6" y="206.7" width="1.4" height="1.4" fill="#80b060" opacity="0.7"/><rect x="839.6" y="210.9" width="1.4" height="1.4" fill="#b070c0" opacity="0.7"/><rect x="839.6" y="215.1" width="1.4" height="1.4" fill="#909090" opacity="0.7"/><rect x="841.6" y="198.6" width="6.0" height="0.7" fill="#b0b4b8" opacity="0.5"/><rect x="841.6" y="202.8" width="4.8" height="0.7" fill="#b0b4b8" opacity="0.5"/><rect x="841.6" y="207.0" width="5.5" height="0.7" fill="#b0b4b8" opacity="0.5"/><rect x="841.6" y="211.2" width="3.6" height="0.7" fill="#b0b4b8" opacity="0.5"/><rect x="841.6" y="215.4" width="5.1" height="0.7" fill="#b0b4b8" opacity="0.5"/><rect x="866.8" y="186.2" width="70.4" height="36.2" fill="#000" rx="0.5" opacity="0.16"/><rect x="866.3" y="185.7" width="70.4" height="36.2" fill="#000" rx="0.5" opacity="0.14"/><rect x="866.0" y="185.3" width="70.4" height="36.2" fill="#fbfbfc"/><rect x="866.0" y="186.3" width="1.0" height="1.6" fill="#8a40e0"/><rect x="868.0" y="189.8" width="7.0" height="0.7" fill="#a0a8b8" opacity="0.55"/><rect x="868.0" y="191.4" width="5.6" height="0.7" fill="#a0a8b8" opacity="0.55"/><rect x="868.0" y="193.0" width="6.4" height="0.7" fill="#a0a8b8" opacity="0.55"/><rect x="868.0" y="194.6" width="4.2" height="0.7" fill="#a0a8b8" opacity="0.55"/><rect x="868.0" y="198.3" width="6.0" height="0.7" fill="#8090b0" opacity="0.6"/><rect x="868.0" y="202.8" width="7.0" height="0.7" fill="#a8b4c8" opacity="0.5"/><rect x="868.0" y="204.4" width="5.6" height="0.7" fill="#a8b4c8" opacity="0.5"/><rect x="868.0" y="206.0" width="6.4" height="0.7" fill="#a8b4c8" opacity="0.5"/><rect x="868.0" y="207.6" width="4.2" height="0.7" fill="#a8b4c8" opacity="0.5"/><rect x="868.0" y="209.2" width="6.0" height="0.7" fill="#a8b4c8" opacity="0.5"/><rect x="868.0" y="210.8" width="4.9" height="0.7" fill="#a8b4c8" opacity="0.5"/><rect x="868.0" y="212.4" width="7.0" height="0.7" fill="#a8b4c8" opacity="0.5"/><rect x="868.0" y="216.1" width="7.0" height="1.3" fill="#9a60e0" opacity="0.75"/><rect x="876.2" y="188.3" width="8.6" height="32.2" fill="#eef2f8"/><rect x="876.8" y="189.3" width="7.6" height="0.7" fill="#8098c0" opacity="0.55"/><rect x="876.8" y="190.9" width="6.1" height="0.7" fill="#8098c0" opacity="0.55"/><rect x="876.8" y="192.5" width="7.0" height="0.7" fill="#8098c0" opacity="0.55"/><rect x="876.8" y="194.2" width="4.6" height="0.7" fill="#8098c0" opacity="0.55"/><rect x="876.8" y="195.8" width="6.5" height="0.7" fill="#8098c0" opacity="0.55"/><rect x="876.8" y="197.4" width="5.3" height="0.7" fill="#8098c0" opacity="0.55"/><rect x="876.8" y="199.0" width="7.6" height="0.7" fill="#8098c0" opacity="0.55"/><rect x="876.8" y="200.6" width="6.1" height="0.7" fill="#8098c0" opacity="0.55"/><rect x="876.8" y="202.3" width="7.0" height="0.7" fill="#8098c0" opacity="0.55"/><rect x="876.8" y="203.9" width="4.6" height="0.7" fill="#8098c0" opacity="0.55"/><rect x="876.8" y="205.5" width="6.5" height="0.7" fill="#8098c0" opacity="0.55"/><rect x="876.8" y="207.1" width="5.3" height="0.7" fill="#8098c0" opacity="0.55"/><rect x="876.8" y="208.7" width="7.6" height="0.7" fill="#8098c0" opacity="0.55"/><rect x="876.8" y="210.4" width="6.1" height="0.7" fill="#8098c0" opacity="0.55"/><rect x="876.8" y="212.0" width="7.0" height="0.7" fill="#8098c0" opacity="0.55"/><rect x="876.8" y="213.6" width="4.6" height="0.7" fill="#8098c0" opacity="0.55"/><rect x="876.8" y="215.2" width="6.5" height="0.7" fill="#8098c0" opacity="0.55"/><rect x="876.8" y="216.8" width="5.3" height="0.7" fill="#8098c0" opacity="0.55"/><rect x="876.8" y="218.5" width="7.6" height="0.7" fill="#8098c0" opacity="0.55"/><rect x="866.0" y="197.3" width="0.9" height="9.0" fill="#7090d0" opacity="0.7"/><rect x="885.6" y="185.3" width="50.8" height="36.2" fill="#fcfcfc"/><rect x="885.6" y="186.1" width="50.8" height="2.3" fill="#2fb436"/><rect x="899.6" y="186.6" width="8.0" height="1.1" fill="#e8f0a0" opacity="0.8"/><rect x="915.6" y="186.6" width="5.0" height="1.1" fill="#f4fff4" opacity="0.8"/><rect x="887.6" y="189.5" width="2.0" height="1.2" fill="#4a80c0" opacity="0.6"/><rect x="891.6" y="189.5" width="2.0" height="1.2" fill="#e0b040" opacity="0.6"/><rect x="929.4" y="189.3" width="5.0" height="1.6" fill="#6a6a6a" rx="0.4" opacity="0.7"/><rect x="887.1" y="192.8" width="1.6" height="1.4" fill="#7db7ea" opacity="0.8"/><rect x="889.7" y="193.1" width="4.0" height="0.7" fill="#c8ccd2" opacity="0.8"/><rect x="887.1" y="195.4" width="1.6" height="1.4" fill="#8cc0ee" opacity="0.8"/><rect x="889.7" y="195.7" width="6.0" height="0.7" fill="#c8ccd2" opacity="0.8"/><rect x="887.1" y="198.0" width="1.6" height="1.4" fill="#6aa9e4" opacity="0.8"/><rect x="889.7" y="198.3" width="8.0" height="0.7" fill="#c8ccd2" opacity="0.8"/><rect x="887.1" y="200.6" width="1.6" height="1.4" fill="#9cc8f0" opacity="0.8"/><rect x="889.7" y="200.9" width="5.0" height="0.7" fill="#c8ccd2" opacity="0.8"/><rect x="887.1" y="203.2" width="1.6" height="1.4" fill="#e0a060" opacity="0.8"/><rect x="889.7" y="203.5" width="7.0" height="0.7" fill="#c8ccd2" opacity="0.8"/><rect x="887.1" y="205.8" width="1.6" height="1.4" fill="#7db7ea" opacity="0.8"/><rect x="889.7" y="206.1" width="4.0" height="0.7" fill="#c8ccd2" opacity="0.8"/><rect x="887.1" y="208.4" width="1.6" height="1.4" fill="#8cc0ee" opacity="0.8"/><rect x="889.7" y="208.7" width="6.0" height="0.7" fill="#c8ccd2" opacity="0.8"/><rect x="887.1" y="211.0" width="1.6" height="1.4" fill="#6aa9e4" opacity="0.8"/><rect x="889.7" y="211.3" width="8.0" height="0.7" fill="#c8ccd2" opacity="0.8"/><rect x="887.1" y="213.6" width="1.6" height="1.4" fill="#e0a060" opacity="0.8"/><rect x="889.7" y="213.9" width="5.0" height="0.7" fill="#c8ccd2" opacity="0.8"/><rect x="887.1" y="216.2" width="1.6" height="1.4" fill="#e0a060" opacity="0.8"/><rect x="889.7" y="216.5" width="7.0" height="0.7" fill="#c8ccd2" opacity="0.8"/><rect x="899.6" y="192.8" width="4.0" height="0.7" fill="#888" opacity="0.6"/><rect x="899.6" y="195.3" width="22.0" height="0.7" fill="#a0a4a8" opacity="0.5"/><rect x="899.6" y="197.0" width="17.6" height="0.7" fill="#a0a4a8" opacity="0.5"/><rect x="899.6" y="199.8" width="20.0" height="0.7" fill="#a8acb0" opacity="0.45"/><rect x="899.6" y="201.5" width="16.0" height="0.7" fill="#a8acb0" opacity="0.45"/><rect x="899.6" y="203.8" width="18.0" height="0.7" fill="#a8acb0" opacity="0.4"/><rect x="902.8" y="208.5" width="4.6" height="4.6" fill="#2a50c8" rx="0.3"/><rect x="903.8" y="209.3" width="1.6" height="1.6" fill="#50b860"/><rect x="911.1" y="208.3" width="11.5" height="5.0" fill="#a8c8e4" rx="0.3"/><rect x="915.6" y="209.1" width="4.5" height="3.4" fill="#5a4a40" opacity="0.8"/><rect x="902.6" y="213.9" width="5.0" height="0.8" fill="#777" opacity="0.6"/><rect x="911.1" y="213.9" width="9.0" height="0.8" fill="#777" opacity="0.6"/><rect x="902.6" y="217.9" width="4.0" height="2.4" fill="#6a5a40" opacity="0.7"/><rect x="911.1" y="217.9" width="11.0" height="2.4" fill="#4a5a70" opacity="0.7"/><rect x="925.4" y="193.3" width="7.0" height="0.7" fill="#a0a4a8" opacity="0.5"/><rect x="925.4" y="195.0" width="5.6" height="0.7" fill="#a0a4a8" opacity="0.5"/><rect x="925.4" y="198.3" width="1.4" height="1.4" fill="#e08040" opacity="0.7"/><rect x="925.4" y="202.5" width="1.4" height="1.4" fill="#6090d0" opacity="0.7"/><rect x="925.4" y="206.7" width="1.4" height="1.4" fill="#80b060" opacity="0.7"/><rect x="925.4" y="210.9" width="1.4" height="1.4" fill="#b070c0" opacity="0.7"/><rect x="925.4" y="215.1" width="1.4" height="1.4" fill="#909090" opacity="0.7"/><rect x="927.4" y="198.6" width="6.0" height="0.7" fill="#b0b4b8" opacity="0.5"/><rect x="927.4" y="202.8" width="4.8" height="0.7" fill="#b0b4b8" opacity="0.5"/><rect x="927.4" y="207.0" width="5.5" height="0.7" fill="#b0b4b8" opacity="0.5"/><rect x="927.4" y="211.2" width="3.6" height="0.7" fill="#b0b4b8" opacity="0.5"/><rect x="927.4" y="215.4" width="5.1" height="0.7" fill="#b0b4b8" opacity="0.5"/><rect x="264.6" y="269.9" width="70.8" height="36.2" fill="#000" rx="0.5" opacity="0.16"/><rect x="264.1" y="269.4" width="70.8" height="36.2" fill="#000" rx="0.5" opacity="0.14"/><rect x="263.8" y="269.0" width="70.8" height="36.2" fill="#fdfdfd"/><rect x="263.8" y="269.0" width="70.8" height="1.3" fill="#eef0f2"/><rect x="265.3" y="271.2" width="3.0" height="0.8" fill="#8a8f98" opacity="0.6"/><rect x="269.8" y="271.2" width="1.5" height="0.8" fill="#7a50e0" opacity="0.7"/><rect x="272.8" y="271.2" width="2.0" height="0.8" fill="#e0a040" opacity="0.6"/><rect x="276.8" y="271.2" width="5.0" height="0.8" fill="#b0b4ba" opacity="0.6"/><rect x="317.6" y="271.2" width="4.0" height="1.0" fill="#555" opacity="0.6"/><rect x="265.3" y="274.0" width="1.6" height="1.4" fill="#7db7ea" opacity="0.8"/><rect x="267.9" y="274.3" width="4.0" height="0.7" fill="#c8ccd2" opacity="0.8"/><rect x="265.3" y="276.6" width="1.6" height="1.4" fill="#8cc0ee" opacity="0.8"/><rect x="267.9" y="276.9" width="6.0" height="0.7" fill="#c8ccd2" opacity="0.8"/><rect x="265.3" y="279.2" width="1.6" height="1.4" fill="#6aa9e4" opacity="0.8"/><rect x="267.9" y="279.5" width="8.0" height="0.7" fill="#c8ccd2" opacity="0.8"/><rect x="265.3" y="281.8" width="1.6" height="1.4" fill="#9cc8f0" opacity="0.8"/><rect x="267.9" y="282.1" width="5.0" height="0.7" fill="#c8ccd2" opacity="0.8"/><rect x="265.3" y="284.4" width="1.6" height="1.4" fill="#e0a060" opacity="0.8"/><rect x="267.9" y="284.7" width="7.0" height="0.7" fill="#c8ccd2" opacity="0.8"/><rect x="265.3" y="287.0" width="1.6" height="1.4" fill="#7db7ea" opacity="0.8"/><rect x="267.9" y="287.3" width="4.0" height="0.7" fill="#c8ccd2" opacity="0.8"/><rect x="265.3" y="289.6" width="1.6" height="1.4" fill="#8cc0ee" opacity="0.8"/><rect x="267.9" y="289.9" width="6.0" height="0.7" fill="#c8ccd2" opacity="0.8"/><rect x="265.3" y="292.2" width="1.6" height="1.4" fill="#6aa9e4" opacity="0.8"/><rect x="267.9" y="292.5" width="8.0" height="0.7" fill="#c8ccd2" opacity="0.8"/><rect x="265.3" y="294.8" width="1.6" height="1.4" fill="#e0a060" opacity="0.8"/><rect x="267.9" y="295.1" width="5.0" height="0.7" fill="#c8ccd2" opacity="0.8"/><rect x="265.3" y="297.4" width="1.6" height="1.4" fill="#e0a060" opacity="0.8"/><rect x="267.9" y="297.7" width="7.0" height="0.7" fill="#c8ccd2" opacity="0.8"/><rect x="288.3" y="278.0" width="4.0" height="2.6" fill="#161616" rx="0.3"/><rect x="284.8" y="288.6" width="21.0" height="1.1" fill="#2a2a2a" opacity="0.8"/><rect x="284.8" y="290.4" width="15.0" height="0.8" fill="#555" opacity="0.6"/><rect x="285.8" y="294.6" width="20.0" height="0.7" fill="#8a8f96" opacity="0.5"/><rect x="285.8" y="296.1" width="16.0" height="0.7" fill="#8a8f96" opacity="0.5"/><rect x="284.8" y="299.2" width="2.0" height="1.4" fill="#444" opacity="0.7"/><rect x="287.8" y="299.6" width="5.0" height="0.7" fill="#999" opacity="0.5"/><rect x="285.8" y="302.6" width="22.0" height="0.7" fill="#8a8f96" opacity="0.45"/><rect x="285.8" y="304.0" width="17.6" height="0.7" fill="#8a8f96" opacity="0.45"/><rect x="321.6" y="273.0" width="0.4" height="30.2" fill="#e4e6e8"/><rect x="323.1" y="278.0" width="8.0" height="0.7" fill="#9ab0d0" opacity="0.55"/><rect x="323.1" y="279.6" width="6.4" height="0.7" fill="#9ab0d0" opacity="0.55"/><rect x="323.1" y="283.0" width="8.5" height="0.7" fill="#a8acb2" opacity="0.5"/><rect x="323.1" y="284.5" width="6.8" height="0.7" fill="#a8acb2" opacity="0.5"/><rect x="323.1" y="286.0" width="7.8" height="0.7" fill="#a8acb2" opacity="0.5"/><rect x="323.1" y="287.5" width="5.1" height="0.7" fill="#a8acb2" opacity="0.5"/><rect x="323.1" y="289.0" width="7.2" height="0.7" fill="#a8acb2" opacity="0.5"/><rect x="323.1" y="290.5" width="5.9" height="0.7" fill="#a8acb2" opacity="0.5"/><rect x="323.1" y="292.0" width="8.5" height="0.7" fill="#a8acb2" opacity="0.5"/><rect x="323.1" y="293.5" width="6.8" height="0.7" fill="#a8acb2" opacity="0.5"/><rect x="323.1" y="295.0" width="7.8" height="0.7" fill="#a8acb2" opacity="0.5"/><rect x="276.8" y="271.0" width="6.0" height="1.4" fill="#4030d0" opacity="0.8"/><rect x="350.4" y="269.9" width="70.8" height="36.2" fill="#000" rx="0.5" opacity="0.16"/><rect x="349.9" y="269.4" width="70.8" height="36.2" fill="#000" rx="0.5" opacity="0.14"/><rect x="349.6" y="269.0" width="70.8" height="36.2" fill="#fdfdfd"/><rect x="349.6" y="269.0" width="70.8" height="1.3" fill="#eef0f2"/><rect x="351.1" y="271.2" width="3.0" height="0.8" fill="#8a8f98" opacity="0.6"/><rect x="355.6" y="271.2" width="1.5" height="0.8" fill="#7a50e0" opacity="0.7"/><rect x="358.6" y="271.2" width="2.0" height="0.8" fill="#e0a040" opacity="0.6"/><rect x="362.6" y="271.2" width="5.0" height="0.8" fill="#b0b4ba" opacity="0.6"/><rect x="403.4" y="271.2" width="4.0" height="1.0" fill="#555" opacity="0.6"/><rect x="351.1" y="274.0" width="1.6" height="1.4" fill="#7db7ea" opacity="0.8"/><rect x="353.7" y="274.3" width="4.0" height="0.7" fill="#c8ccd2" opacity="0.8"/><rect x="351.1" y="276.6" width="1.6" height="1.4" fill="#8cc0ee" opacity="0.8"/><rect x="353.7" y="276.9" width="6.0" height="0.7" fill="#c8ccd2" opacity="0.8"/><rect x="351.1" y="279.2" width="1.6" height="1.4" fill="#6aa9e4" opacity="0.8"/><rect x="353.7" y="279.5" width="8.0" height="0.7" fill="#c8ccd2" opacity="0.8"/><rect x="351.1" y="281.8" width="1.6" height="1.4" fill="#9cc8f0" opacity="0.8"/><rect x="353.7" y="282.1" width="5.0" height="0.7" fill="#c8ccd2" opacity="0.8"/><rect x="351.1" y="284.4" width="1.6" height="1.4" fill="#e0a060" opacity="0.8"/><rect x="353.7" y="284.7" width="7.0" height="0.7" fill="#c8ccd2" opacity="0.8"/><rect x="351.1" y="287.0" width="1.6" height="1.4" fill="#7db7ea" opacity="0.8"/><rect x="353.7" y="287.3" width="4.0" height="0.7" fill="#c8ccd2" opacity="0.8"/><rect x="351.1" y="289.6" width="1.6" height="1.4" fill="#8cc0ee" opacity="0.8"/><rect x="353.7" y="289.9" width="6.0" height="0.7" fill="#c8ccd2" opacity="0.8"/><rect x="351.1" y="292.2" width="1.6" height="1.4" fill="#6aa9e4" opacity="0.8"/><rect x="353.7" y="292.5" width="8.0" height="0.7" fill="#c8ccd2" opacity="0.8"/><rect x="351.1" y="294.8" width="1.6" height="1.4" fill="#e0a060" opacity="0.8"/><rect x="353.7" y="295.1" width="5.0" height="0.7" fill="#c8ccd2" opacity="0.8"/><rect x="351.1" y="297.4" width="1.6" height="1.4" fill="#e0a060" opacity="0.8"/><rect x="353.7" y="297.7" width="7.0" height="0.7" fill="#c8ccd2" opacity="0.8"/><rect x="374.1" y="278.0" width="4.0" height="2.6" fill="#161616" rx="0.3"/><rect x="370.6" y="286.3" width="21.0" height="1.1" fill="#2a2a2a" opacity="0.8"/><rect x="370.6" y="288.1" width="15.0" height="0.8" fill="#555" opacity="0.6"/><rect x="371.6" y="292.3" width="20.0" height="0.7" fill="#8a8f96" opacity="0.5"/><rect x="371.6" y="293.8" width="16.0" height="0.7" fill="#8a8f96" opacity="0.5"/><rect x="370.6" y="296.9" width="2.0" height="1.4" fill="#444" opacity="0.7"/><rect x="373.6" y="297.3" width="5.0" height="0.7" fill="#999" opacity="0.5"/><rect x="371.6" y="300.3" width="22.0" height="0.7" fill="#8a8f96" opacity="0.45"/><rect x="371.6" y="301.7" width="17.6" height="0.7" fill="#8a8f96" opacity="0.45"/><rect x="407.4" y="273.0" width="0.4" height="30.2" fill="#e4e6e8"/><rect x="408.9" y="278.0" width="8.0" height="0.7" fill="#9ab0d0" opacity="0.55"/><rect x="408.9" y="279.6" width="6.4" height="0.7" fill="#9ab0d0" opacity="0.55"/><rect x="408.9" y="283.0" width="8.5" height="0.7" fill="#a8acb2" opacity="0.5"/><rect x="408.9" y="284.5" width="6.8" height="0.7" fill="#a8acb2" opacity="0.5"/><rect x="408.9" y="286.0" width="7.8" height="0.7" fill="#a8acb2" opacity="0.5"/><rect x="408.9" y="287.5" width="5.1" height="0.7" fill="#a8acb2" opacity="0.5"/><rect x="408.9" y="289.0" width="7.2" height="0.7" fill="#a8acb2" opacity="0.5"/><rect x="408.9" y="290.5" width="5.9" height="0.7" fill="#a8acb2" opacity="0.5"/><rect x="408.9" y="292.0" width="8.5" height="0.7" fill="#a8acb2" opacity="0.5"/><rect x="408.9" y="293.5" width="6.8" height="0.7" fill="#a8acb2" opacity="0.5"/><rect x="408.9" y="295.0" width="7.8" height="0.7" fill="#a8acb2" opacity="0.5"/><rect x="436.1" y="269.9" width="71.0" height="36.2" fill="#000" rx="0.5" opacity="0.16"/><rect x="435.6" y="269.4" width="71.0" height="36.2" fill="#000" rx="0.5" opacity="0.14"/><rect x="435.3" y="269.0" width="71.0" height="36.2" fill="#fdfdfd"/><rect x="435.3" y="269.0" width="71.0" height="1.3" fill="#eef0f2"/><rect x="436.8" y="271.2" width="3.0" height="0.8" fill="#8a8f98" opacity="0.6"/><rect x="441.3" y="271.2" width="1.5" height="0.8" fill="#7a50e0" opacity="0.7"/><rect x="444.3" y="271.2" width="2.0" height="0.8" fill="#e0a040" opacity="0.6"/><rect x="448.3" y="271.2" width="5.0" height="0.8" fill="#b0b4ba" opacity="0.6"/><rect x="489.3" y="271.2" width="4.0" height="1.0" fill="#555" opacity="0.6"/><rect x="436.8" y="274.0" width="1.6" height="1.4" fill="#7db7ea" opacity="0.8"/><rect x="439.4" y="274.3" width="4.0" height="0.7" fill="#c8ccd2" opacity="0.8"/><rect x="436.8" y="276.6" width="1.6" height="1.4" fill="#8cc0ee" opacity="0.8"/><rect x="439.4" y="276.9" width="6.0" height="0.7" fill="#c8ccd2" opacity="0.8"/><rect x="436.8" y="279.2" width="1.6" height="1.4" fill="#6aa9e4" opacity="0.8"/><rect x="439.4" y="279.5" width="8.0" height="0.7" fill="#c8ccd2" opacity="0.8"/><rect x="436.8" y="281.8" width="1.6" height="1.4" fill="#9cc8f0" opacity="0.8"/><rect x="439.4" y="282.1" width="5.0" height="0.7" fill="#c8ccd2" opacity="0.8"/><rect x="436.8" y="284.4" width="1.6" height="1.4" fill="#e0a060" opacity="0.8"/><rect x="439.4" y="284.7" width="7.0" height="0.7" fill="#c8ccd2" opacity="0.8"/><rect x="436.8" y="287.0" width="1.6" height="1.4" fill="#7db7ea" opacity="0.8"/><rect x="439.4" y="287.3" width="4.0" height="0.7" fill="#c8ccd2" opacity="0.8"/><rect x="436.8" y="289.6" width="1.6" height="1.4" fill="#8cc0ee" opacity="0.8"/><rect x="439.4" y="289.9" width="6.0" height="0.7" fill="#c8ccd2" opacity="0.8"/><rect x="436.8" y="292.2" width="1.6" height="1.4" fill="#6aa9e4" opacity="0.8"/><rect x="439.4" y="292.5" width="8.0" height="0.7" fill="#c8ccd2" opacity="0.8"/><rect x="436.8" y="294.8" width="1.6" height="1.4" fill="#e0a060" opacity="0.8"/><rect x="439.4" y="295.1" width="5.0" height="0.7" fill="#c8ccd2" opacity="0.8"/><rect x="436.8" y="297.4" width="1.6" height="1.4" fill="#e0a060" opacity="0.8"/><rect x="439.4" y="297.7" width="7.0" height="0.7" fill="#c8ccd2" opacity="0.8"/><rect x="459.8" y="278.0" width="4.0" height="2.6" fill="#161616" rx="0.3"/><rect x="456.3" y="286.3" width="21.0" height="1.1" fill="#2a2a2a" opacity="0.8"/><rect x="456.3" y="288.1" width="15.0" height="0.8" fill="#555" opacity="0.6"/><rect x="457.3" y="292.3" width="20.0" height="0.7" fill="#8a8f96" opacity="0.5"/><rect x="457.3" y="293.8" width="16.0" height="0.7" fill="#8a8f96" opacity="0.5"/><rect x="456.3" y="296.9" width="2.0" height="1.4" fill="#444" opacity="0.7"/><rect x="459.3" y="297.3" width="5.0" height="0.7" fill="#999" opacity="0.5"/><rect x="457.3" y="300.3" width="22.0" height="0.7" fill="#8a8f96" opacity="0.45"/><rect x="457.3" y="301.7" width="17.6" height="0.7" fill="#8a8f96" opacity="0.45"/><rect x="493.3" y="273.0" width="0.4" height="30.2" fill="#e4e6e8"/><rect x="494.8" y="278.0" width="8.0" height="0.7" fill="#9ab0d0" opacity="0.55"/><rect x="494.8" y="279.6" width="6.4" height="0.7" fill="#9ab0d0" opacity="0.55"/><rect x="494.8" y="283.0" width="8.5" height="0.7" fill="#a8acb2" opacity="0.5"/><rect x="494.8" y="284.5" width="6.8" height="0.7" fill="#a8acb2" opacity="0.5"/><rect x="494.8" y="286.0" width="7.8" height="0.7" fill="#a8acb2" opacity="0.5"/><rect x="494.8" y="287.5" width="5.1" height="0.7" fill="#a8acb2" opacity="0.5"/><rect x="494.8" y="289.0" width="7.2" height="0.7" fill="#a8acb2" opacity="0.5"/><rect x="494.8" y="290.5" width="5.9" height="0.7" fill="#a8acb2" opacity="0.5"/><rect x="494.8" y="292.0" width="8.5" height="0.7" fill="#a8acb2" opacity="0.5"/><rect x="494.8" y="293.5" width="6.8" height="0.7" fill="#a8acb2" opacity="0.5"/><rect x="494.8" y="295.0" width="7.8" height="0.7" fill="#a8acb2" opacity="0.5"/><rect x="522.4" y="269.9" width="70.8" height="36.2" fill="#000" rx="0.5" opacity="0.16"/><rect x="521.9" y="269.4" width="70.8" height="36.2" fill="#000" rx="0.5" opacity="0.14"/><rect x="521.6" y="269.0" width="70.8" height="36.2" fill="#fdfdfd"/><rect x="521.6" y="269.0" width="70.8" height="1.3" fill="#eef0f2"/><rect x="523.1" y="271.2" width="3.0" height="0.8" fill="#8a8f98" opacity="0.6"/><rect x="527.6" y="271.2" width="1.5" height="0.8" fill="#7a50e0" opacity="0.7"/><rect x="530.6" y="271.2" width="2.0" height="0.8" fill="#e0a040" opacity="0.6"/><rect x="571.6" y="270.6" width="4.0" height="1.6" fill="#555" rx="0.4" opacity="0.7"/><rect x="523.1" y="274.0" width="1.6" height="1.4" fill="#7db7ea" opacity="0.8"/><rect x="525.7" y="274.3" width="4.0" height="0.7" fill="#c8ccd2" opacity="0.8"/><rect x="523.1" y="276.6" width="1.6" height="1.4" fill="#8cc0ee" opacity="0.8"/><rect x="525.7" y="276.9" width="6.0" height="0.7" fill="#c8ccd2" opacity="0.8"/><rect x="523.1" y="279.2" width="1.6" height="1.4" fill="#6aa9e4" opacity="0.8"/><rect x="525.7" y="279.5" width="8.0" height="0.7" fill="#c8ccd2" opacity="0.8"/><rect x="523.1" y="281.8" width="1.6" height="1.4" fill="#9cc8f0" opacity="0.8"/><rect x="525.7" y="282.1" width="5.0" height="0.7" fill="#c8ccd2" opacity="0.8"/><rect x="523.1" y="284.4" width="1.6" height="1.4" fill="#e0a060" opacity="0.8"/><rect x="525.7" y="284.7" width="7.0" height="0.7" fill="#c8ccd2" opacity="0.8"/><rect x="523.1" y="287.0" width="1.6" height="1.4" fill="#7db7ea" opacity="0.8"/><rect x="525.7" y="287.3" width="4.0" height="0.7" fill="#c8ccd2" opacity="0.8"/><rect x="523.1" y="289.6" width="1.6" height="1.4" fill="#8cc0ee" opacity="0.8"/><rect x="525.7" y="289.9" width="6.0" height="0.7" fill="#c8ccd2" opacity="0.8"/><rect x="523.1" y="292.2" width="1.6" height="1.4" fill="#6aa9e4" opacity="0.8"/><rect x="525.7" y="292.5" width="8.0" height="0.7" fill="#c8ccd2" opacity="0.8"/><rect x="523.1" y="294.8" width="1.6" height="1.4" fill="#e0a060" opacity="0.8"/><rect x="525.7" y="295.1" width="5.0" height="0.7" fill="#c8ccd2" opacity="0.8"/><rect x="523.1" y="297.4" width="1.6" height="1.4" fill="#e0a060" opacity="0.8"/><rect x="525.7" y="297.7" width="7.0" height="0.7" fill="#c8ccd2" opacity="0.8"/><rect x="533.4" y="273.4" width="39.0" height="18.2" fill="#dcdcda"/><circle cx="537.1" cy="275.8" r="2.2" fill="#d03828"/><rect x="534.6" y="273.6" width="5.5" height="1.4" fill="#c03020" rx="0.5"/><rect x="564.1" y="273.8" width="5.8" height="2.8" fill="#3a98c0" rx="1"/><rect x="566.6" y="279.5" width="5.6" height="7.5" fill="#6a6a68" rx="0.8"/><rect x="567.2" y="280.2" width="4.4" height="1.6" fill="#8a8a88" rx="0.4"/><path d="M544.8 282.2 c0 -9.5 16 -9.5 16 0 l-2.2 0 c0 -6.6 -11.6 -6.6 -11.6 0z" fill="#222226"/><circle cx="548.8" cy="284.4" r="4.1" fill="#2a2a2e"/><circle cx="558.2" cy="284.4" r="4.1" fill="#2a2a2e"/><circle cx="548.8" cy="284.6" r="3.3" fill="#d63a26"/><circle cx="558.2" cy="284.6" r="3.3" fill="#d63a26"/><circle cx="547.8" cy="283.6" r="0.5" fill="#f0a050" opacity="0.8"/><circle cx="557.2" cy="283.6" r="0.5" fill="#f0a050" opacity="0.8"/><circle cx="549.8" cy="285.1" r="0.5" fill="#f0a050" opacity="0.8"/><circle cx="559.2" cy="285.1" r="0.5" fill="#f0a050" opacity="0.8"/><circle cx="548.8" cy="286.0" r="0.5" fill="#f0a050" opacity="0.8"/><circle cx="558.2" cy="286.0" r="0.5" fill="#f0a050" opacity="0.8"/><circle cx="547.4" cy="285.4" r="0.5" fill="#f0a050" opacity="0.8"/><circle cx="556.8" cy="285.4" r="0.5" fill="#f0a050" opacity="0.8"/><circle cx="550.0" cy="283.4" r="0.5" fill="#f0a050" opacity="0.8"/><circle cx="559.4" cy="283.4" r="0.5" fill="#f0a050" opacity="0.8"/><rect x="535.6" y="289.6" width="5.0" height="1.0" fill="#e09050" opacity="0.5"/><rect x="542.2" y="292.0" width="2.0" height="0.7" fill="#666" opacity="0.6"/><rect x="542.2" y="293.6" width="21.0" height="1.1" fill="#222" opacity="0.85"/><rect x="542.2" y="295.5" width="19.0" height="1.1" fill="#333" opacity="0.8"/><rect x="542.2" y="297.8" width="20.5" height="1.2" fill="#222" opacity="0.85"/><rect x="542.2" y="299.8" width="4.0" height="0.7" fill="#777" opacity="0.6"/><rect x="542.2" y="303.0" width="5.0" height="0.7" fill="#777" opacity="0.6"/><rect x="576.2" y="272.0" width="0.4" height="31.2" fill="#e4e6e8"/><rect x="578.1" y="274.5" width="9.0" height="0.7" fill="#9aa0a8" opacity="0.5"/><rect x="578.1" y="276.9" width="7.2" height="0.7" fill="#9aa0a8" opacity="0.5"/><rect x="578.1" y="279.3" width="8.3" height="0.7" fill="#9aa0a8" opacity="0.5"/><rect x="578.1" y="283.0" width="9.0" height="0.7" fill="#888" opacity="0.5"/><rect x="578.1" y="284.6" width="7.2" height="0.7" fill="#888" opacity="0.5"/><rect x="578.1" y="288.0" width="9.5" height="0.7" fill="#a8acb2" opacity="0.5"/><rect x="578.1" y="289.7" width="7.6" height="0.7" fill="#a8acb2" opacity="0.5"/><rect x="578.1" y="291.4" width="8.7" height="0.7" fill="#a8acb2" opacity="0.5"/><rect x="578.1" y="293.1" width="5.7" height="0.7" fill="#a8acb2" opacity="0.5"/><rect x="578.1" y="294.8" width="8.1" height="0.7" fill="#a8acb2" opacity="0.5"/><rect x="578.1" y="296.5" width="6.6" height="0.7" fill="#a8acb2" opacity="0.5"/><rect x="578.1" y="298.2" width="9.5" height="0.7" fill="#a8acb2" opacity="0.5"/><rect x="578.1" y="299.9" width="7.6" height="0.7" fill="#a8acb2" opacity="0.5"/><rect x="608.1" y="269.9" width="71.0" height="36.2" fill="#000" rx="0.5" opacity="0.16"/><rect x="607.6" y="269.4" width="71.0" height="36.2" fill="#000" rx="0.5" opacity="0.14"/><rect x="607.3" y="269.0" width="71.0" height="36.2" fill="#fdfdfd"/><rect x="607.3" y="269.0" width="71.0" height="1.2" fill="#e8eaec"/><rect x="607.3" y="270.2" width="71.0" height="1.0" fill="#f4f5f6"/><rect x="609.3" y="269.3" width="22.0" height="0.7" fill="#b0b4b8" opacity="0.6"/><rect x="610.3" y="272.6" width="2.0" height="0.7" fill="#888" opacity="0.6"/><rect x="618.3" y="272.6" width="20.0" height="0.7" fill="#a0a4a8" opacity="0.6"/><rect x="608.8" y="275.2" width="8.0" height="0.7" fill="#999" opacity="0.55"/><rect x="608.8" y="278.0" width="8.5" height="0.7" fill="#a0a4a8" opacity="0.55"/><rect x="608.8" y="279.3" width="6.8" height="0.7" fill="#a0a4a8" opacity="0.55"/><rect x="608.8" y="280.6" width="7.8" height="0.7" fill="#a0a4a8" opacity="0.55"/><circle cx="645.7" cy="280.0" r="0.6" fill="#667"/><rect x="647.3" y="279.7" width="10.0" height="0.6" fill="#a0a4b0" opacity="0.6"/><circle cx="645.7" cy="282.5" r="0.6" fill="#667"/><rect x="647.3" y="282.2" width="12.0" height="0.6" fill="#a0a4b0" opacity="0.6"/><circle cx="645.7" cy="285.0" r="0.6" fill="#667"/><rect x="647.3" y="284.7" width="10.0" height="0.6" fill="#a0a4b0" opacity="0.6"/><rect x="636.3" y="286.4" width="24.0" height="0.7" fill="#909498" opacity="0.55"/><rect x="636.3" y="288.4" width="20.0" height="0.6" fill="#a0a4a8" opacity="0.5"/><rect x="636.3" y="289.8" width="4.0" height="0.6" fill="#a0a4a8" opacity="0.5"/><rect x="636.3" y="291.3" width="18.0" height="0.6" fill="#a0a4a8" opacity="0.5"/><rect x="636.3" y="292.8" width="10.0" height="0.6" fill="#a0a4a8" opacity="0.5"/><rect x="636.3" y="294.2" width="7.0" height="0.6" fill="#a0a4a8" opacity="0.5"/><rect x="636.3" y="295.6" width="6.0" height="0.6" fill="#a0a4a8" opacity="0.5"/><rect x="636.3" y="297.1" width="4.0" height="0.6" fill="#a0a4a8" opacity="0.5"/><rect x="636.3" y="298.5" width="18.0" height="0.6" fill="#a0a4a8" opacity="0.5"/><rect x="636.3" y="300.0" width="12.0" height="0.6" fill="#a0a4a8" opacity="0.5"/><rect x="636.3" y="302.5" width="1.0" height="0.6" fill="#888" opacity="0.6"/><rect x="694.2" y="272.9" width="70.6" height="32.8" fill="#000" rx="0.5" opacity="0.16"/><rect x="693.7" y="272.4" width="70.6" height="32.8" fill="#000" rx="0.5" opacity="0.14"/><linearGradient id="g14" x1="0" y1="0" x2="1" y2="0"><stop offset="0" stop-color="#bdd0e0"/><stop offset="1" stop-color="#a3bdd4"/></linearGradient><rect x="693.4" y="272.0" width="70.6" height="32.8" fill="url(#g14)"/><clipPath id="cg14"><rect x="693.4" y="272.0" width="70.6" height="32.8"/></clipPath><g clip-path="url(#cg14)"><g transform="translate(728.7 303.6) scale(1.000)"><path d="M-25 0 C-26 -5 -25 -10 -21 -16 C-16 -22 -6 -26 0 -27.600 C4 -29 10 -30 14 -26.600 C17 -23 17 -17 14 -12.500 C18 -13 22 -11 24 -7 C25.500 -4 25 -2 24 0 Z" fill="#1446cc"/><path d="M-25 0 C-26 -5 -25 -10 -21 -16 C-14 -14 -9 -8 -8 0 Z" fill="#1f62e2"/><path d="M-23 -3 C-18 -6 -13 -4 -11 0 L-22 0Z" fill="#3584f0" opacity=".8"/><path d="M-21 -16 C-16 -22 -6 -26 0 -27.600 C-3 -20 -4 -12 -2 -4 C-8 -10 -14 -14 -21 -16Z" fill="#1d5ee0"/><path d="M-16 -19 C-10 -18 -5 -13 -4 -7 C-8 -12 -12 -15 -18 -17Z" fill="#3a86f0" opacity=".75"/><path d="M0 -27.600 C4 -29 10 -30 14 -26.600 C17 -23 17 -17 14 -12.500 C11 -19 6 -23 0 -27.600Z" fill="#2a72ea"/><path d="M-1 -24 C5 -22 10 -17 11 -11 C7 -15 2 -18 -2 -18Z" fill="#2468e6" opacity=".9"/><path d="M-8 0 C-9 -8 -4 -17 4 -19 C9 -18 12 -14 12 -11 C6 -8 4 -4 3 0 Z" fill="#0c2ea4"/><path d="M-3 0 C-4 -7 0 -13 6 -14 C3 -10 2 -5 2 0Z" fill="#071a78" opacity=".9"/><path d="M3 0 C4 -6 10 -12 18 -12.500 C22 -11 25 -6 24 0Z" fill="#1650d6"/><path d="M8 0 C9 -4 13 -7 18 -7 C15 -5 13 -3 13 0Z" fill="#0b2c9e" opacity=".85"/><path d="M14 0 C15 -3 18 -5 22 -4.500 C20 -3 19 -1.500 19 0Z" fill="#2a70e8" opacity=".8"/></g></g><rect x="693.4" y="303.1" width="70.6" height="1.7" fill="#dfe8f0" opacity="0.95"/><rect x="721.7" y="303.5" width="14.0" height="0.8" fill="#6a90c8" opacity="0.6"/><rect x="702.5" y="277.9" width="26.3" height="15.0" fill="#0e0e10"/><rect x="702.5" y="277.9" width="26.3" height="1.0" fill="#2a2a2e"/><rect x="703.5" y="279.7" width="13.2" height="0.5" fill="#8a90a0" opacity="0.55"/><rect x="703.5" y="280.9" width="10.5" height="0.5" fill="#8a90a0" opacity="0.55"/><rect x="703.5" y="282.1" width="12.1" height="0.5" fill="#8a90a0" opacity="0.55"/><rect x="731.4" y="277.9" width="14.1" height="16.1" fill="#0e0e10"/><rect x="731.4" y="277.9" width="14.1" height="1.0" fill="#2a2a2e"/><rect x="732.4" y="279.7" width="7.0" height="0.5" fill="#8a90a0" opacity="0.55"/><rect x="732.4" y="280.9" width="5.6" height="0.5" fill="#8a90a0" opacity="0.55"/><rect x="732.4" y="282.1" width="6.5" height="0.5" fill="#8a90a0" opacity="0.55"/><circle cx="742.4" cy="293.0" r="0.6" fill="#40c040"/><circle cx="739.8" cy="293.0" r="0.6" fill="#d05030"/><rect x="732.6" y="290.0" width="1.2" height="2.0" fill="#d8d8d8" opacity="0.8"/><rect x="780.6" y="272.9" width="70.2" height="32.8" fill="#000" rx="0.5" opacity="0.16"/><rect x="780.1" y="272.4" width="70.2" height="32.8" fill="#000" rx="0.5" opacity="0.14"/><linearGradient id="g15" x1="0" y1="0" x2="1" y2="0"><stop offset="0" stop-color="#bdd0e0"/><stop offset="1" stop-color="#a3bdd4"/></linearGradient><rect x="779.8" y="272.0" width="70.2" height="32.8" fill="url(#g15)"/><clipPath id="cg15"><rect x="779.8" y="272.0" width="70.2" height="32.8"/></clipPath><g clip-path="url(#cg15)"><g transform="translate(814.9 303.6) scale(1.000)"><path d="M-25 0 C-26 -5 -25 -10 -21 -16 C-16 -22 -6 -26 0 -27.600 C4 -29 10 -30 14 -26.600 C17 -23 17 -17 14 -12.500 C18 -13 22 -11 24 -7 C25.500 -4 25 -2 24 0 Z" fill="#1446cc"/><path d="M-25 0 C-26 -5 -25 -10 -21 -16 C-14 -14 -9 -8 -8 0 Z" fill="#1f62e2"/><path d="M-23 -3 C-18 -6 -13 -4 -11 0 L-22 0Z" fill="#3584f0" opacity=".8"/><path d="M-21 -16 C-16 -22 -6 -26 0 -27.600 C-3 -20 -4 -12 -2 -4 C-8 -10 -14 -14 -21 -16Z" fill="#1d5ee0"/><path d="M-16 -19 C-10 -18 -5 -13 -4 -7 C-8 -12 -12 -15 -18 -17Z" fill="#3a86f0" opacity=".75"/><path d="M0 -27.600 C4 -29 10 -30 14 -26.600 C17 -23 17 -17 14 -12.500 C11 -19 6 -23 0 -27.600Z" fill="#2a72ea"/><path d="M-1 -24 C5 -22 10 -17 11 -11 C7 -15 2 -18 -2 -18Z" fill="#2468e6" opacity=".9"/><path d="M-8 0 C-9 -8 -4 -17 4 -19 C9 -18 12 -14 12 -11 C6 -8 4 -4 3 0 Z" fill="#0c2ea4"/><path d="M-3 0 C-4 -7 0 -13 6 -14 C3 -10 2 -5 2 0Z" fill="#071a78" opacity=".9"/><path d="M3 0 C4 -6 10 -12 18 -12.500 C22 -11 25 -6 24 0Z" fill="#1650d6"/><path d="M8 0 C9 -4 13 -7 18 -7 C15 -5 13 -3 13 0Z" fill="#0b2c9e" opacity=".85"/><path d="M14 0 C15 -3 18 -5 22 -4.500 C20 -3 19 -1.500 19 0Z" fill="#2a70e8" opacity=".8"/></g></g><rect x="779.8" y="303.1" width="70.2" height="1.7" fill="#dfe8f0" opacity="0.95"/><rect x="807.9" y="303.5" width="14.0" height="0.8" fill="#6a90c8" opacity="0.6"/><rect x="796.0" y="277.9" width="27.2" height="15.0" fill="#0e0e10"/><rect x="796.0" y="277.9" width="27.2" height="1.0" fill="#2a2a2e"/><rect x="797.0" y="279.7" width="13.6" height="0.5" fill="#8a90a0" opacity="0.55"/><rect x="797.0" y="280.9" width="10.9" height="0.5" fill="#8a90a0" opacity="0.55"/><rect x="797.0" y="282.1" width="12.5" height="0.5" fill="#8a90a0" opacity="0.55"/><rect x="812.1" y="283.0" width="13.9" height="16.2" fill="#0e0e10"/><rect x="812.1" y="283.0" width="13.9" height="1.0" fill="#2a2a2e"/><rect x="813.1" y="284.8" width="7.0" height="0.5" fill="#8a90a0" opacity="0.55"/><rect x="813.1" y="286.0" width="5.6" height="0.5" fill="#8a90a0" opacity="0.55"/><rect x="813.1" y="287.2" width="6.4" height="0.5" fill="#8a90a0" opacity="0.55"/><rect x="812.1" y="283.0" width="13.9" height="1.1" fill="#55555a"/><circle cx="823.0" cy="297.6" r="0.6" fill="#d06030"/><rect x="813.6" y="295.0" width="1.2" height="2.0" fill="#d8d8d8" opacity="0.8"/><rect x="866.8" y="268.9" width="70.0" height="36.6" fill="#000" rx="0.5" opacity="0.16"/><rect x="866.3" y="268.4" width="70.0" height="36.6" fill="#000" rx="0.5" opacity="0.14"/><rect x="866.0" y="268.0" width="70.0" height="36.6" fill="#0c0c0c"/><rect x="867.0" y="269.2" width="4.0" height="0.7" fill="#c8c8c8" opacity="0.6"/><rect x="882.0" y="269.2" width="50.0" height="0.7" fill="#c8c8c8" opacity="0.6"/><rect x="867.0" y="271.0" width="6.0" height="0.7" fill="#c8c8c8" opacity="0.6"/><rect x="867.0" y="272.4" width="38.0" height="0.7" fill="#c8c8c8" opacity="0.6"/><rect x="867.0" y="274.0" width="30.0" height="0.7" fill="#c8c8c8" opacity="0.6"/><rect x="899.0" y="274.0" width="20.0" height="0.7" fill="#c8c8c8" opacity="0.6"/><rect x="867.0" y="276.2" width="25.0" height="0.7" fill="#c8c8c8" opacity="0.6"/><rect x="893.0" y="276.2" width="31.0" height="0.7" fill="#c8c8c8" opacity="0.6"/><rect x="867.0" y="278.4" width="14.0" height="0.7" fill="#c8c8c8" opacity="0.6"/><rect x="882.0" y="278.4" width="8.0" height="0.7" fill="#c8c8c8" opacity="0.6"/><rect x="867.0" y="280.2" width="22.0" height="0.7" fill="#c8c8c8" opacity="0.6"/><rect x="866.0" y="268.0" width="1.3" height="1.3" fill="#3a80d0"/><rect x="264.6" y="360.5" width="70.0" height="35.6" fill="#000" rx="0.5" opacity="0.16"/><rect x="264.1" y="360.0" width="70.0" height="35.6" fill="#000" rx="0.5" opacity="0.14"/><rect x="263.8" y="359.6" width="70.0" height="35.6" fill="#0c0c0c"/><rect x="264.8" y="360.6" width="16.0" height="0.7" fill="#c8c8c8" opacity="0.6"/><rect x="264.8" y="363.0" width="38.0" height="0.7" fill="#c8c8c8" opacity="0.6"/><rect x="264.8" y="365.8" width="46.0" height="0.7" fill="#c8c8c8" opacity="0.6"/><rect x="264.8" y="368.0" width="24.0" height="0.7" fill="#c8c8c8" opacity="0.6"/><rect x="290.8" y="368.0" width="10.0" height="0.7" fill="#c8c8c8" opacity="0.6"/><rect x="305.8" y="367.8" width="26.0" height="0.7" fill="#c8c8c8" opacity="0.6"/><rect x="264.8" y="369.4" width="30.0" height="0.7" fill="#c8c8c8" opacity="0.6"/><rect x="264.8" y="371.6" width="22.0" height="0.7" fill="#c8c8c8" opacity="0.6"/><rect x="287.8" y="373.0" width="10.0" height="0.7" fill="#c8c8c8" opacity="0.6"/><rect x="263.8" y="359.6" width="70.0" height="1.4" fill="#2a2420"/><rect x="350.8" y="354.2" width="70.4" height="43.2" fill="#000" rx="0.5" opacity="0.16"/><rect x="350.3" y="353.7" width="70.4" height="43.2" fill="#000" rx="0.5" opacity="0.14"/><rect x="350.0" y="353.3" width="70.4" height="43.2" fill="#aac2da"/><rect x="350.0" y="353.3" width="70.4" height="1.4" fill="#e8eef6"/><rect x="350.0" y="353.3" width="1.2" height="43.2" fill="#dde6f0" opacity="0.8"/><rect x="356.6" y="355.5" width="57.6" height="36.6" fill="#fcfcfc"/><rect x="356.6" y="355.5" width="14.6" height="36.6" fill="#f2f3f5"/><rect x="357.6" y="358.7" width="1.1" height="1.1" fill="#4a90d8" opacity="0.75"/><rect x="359.6" y="358.9" width="6.0" height="0.7" fill="#8a8f98" opacity="0.55"/><rect x="357.6" y="361.1" width="1.1" height="1.1" fill="#e08040" opacity="0.75"/><rect x="359.6" y="361.4" width="9.0" height="0.7" fill="#8a8f98" opacity="0.55"/><rect x="357.6" y="363.6" width="1.1" height="1.1" fill="#50a860" opacity="0.75"/><rect x="359.6" y="363.8" width="7.0" height="0.7" fill="#8a8f98" opacity="0.55"/><rect x="357.6" y="366.1" width="1.1" height="1.1" fill="#8060c0" opacity="0.75"/><rect x="359.6" y="366.3" width="10.0" height="0.7" fill="#8a8f98" opacity="0.55"/><rect x="357.6" y="368.5" width="1.1" height="1.1" fill="#4a90d8" opacity="0.75"/><rect x="359.6" y="368.7" width="8.0" height="0.7" fill="#8a8f98" opacity="0.55"/><rect x="357.6" y="370.9" width="1.1" height="1.1" fill="#e08040" opacity="0.75"/><rect x="359.6" y="371.2" width="6.0" height="0.7" fill="#8a8f98" opacity="0.55"/><rect x="357.6" y="373.4" width="1.1" height="1.1" fill="#50a860" opacity="0.75"/><rect x="359.6" y="373.6" width="9.0" height="0.7" fill="#8a8f98" opacity="0.55"/><rect x="357.6" y="375.8" width="1.1" height="1.1" fill="#8060c0" opacity="0.75"/><rect x="359.6" y="376.1" width="7.0" height="0.7" fill="#8a8f98" opacity="0.55"/><rect x="357.6" y="378.3" width="1.1" height="1.1" fill="#4a90d8" opacity="0.75"/><rect x="359.6" y="378.5" width="10.0" height="0.7" fill="#8a8f98" opacity="0.55"/><rect x="357.6" y="380.8" width="1.1" height="1.1" fill="#e08040" opacity="0.75"/><rect x="359.6" y="381.0" width="8.0" height="0.7" fill="#8a8f98" opacity="0.55"/><rect x="357.6" y="383.2" width="1.1" height="1.1" fill="#50a860" opacity="0.75"/><rect x="359.6" y="383.4" width="6.0" height="0.7" fill="#8a8f98" opacity="0.55"/><rect x="357.6" y="385.6" width="1.1" height="1.1" fill="#8060c0" opacity="0.75"/><rect x="359.6" y="385.9" width="9.0" height="0.7" fill="#8a8f98" opacity="0.55"/><rect x="357.6" y="388.1" width="1.1" height="1.1" fill="#4a90d8" opacity="0.75"/><rect x="359.6" y="388.3" width="7.0" height="0.7" fill="#8a8f98" opacity="0.55"/><rect x="359.0" y="356.5" width="4.0" height="0.7" fill="#666" opacity="0.6"/><rect x="371.8" y="356.9" width="41.6" height="14.6" fill="#2e3136"/><path d="M371.8 360.3 l14 9 l10 -7 l12 6 l0 6.6 l-41.6 0 l0 -9z" fill="#3c4046" opacity=".9"/><path d="M380.0 359.3 l10 8 l-4 3 l-9 -7z" fill="#54606c" opacity=".7"/><rect x="391.0" y="361.7" width="3.8" height="3.8" fill="#e8c840" rx="0.3"/><rect x="391.0" y="361.7" width="1.9" height="1.9" fill="#50b060"/><rect x="392.9" y="363.6" width="1.9" height="1.9" fill="#4070d0"/><rect x="392.9" y="361.7" width="1.9" height="1.9" fill="#e8c040"/><rect x="391.0" y="363.6" width="1.9" height="1.9" fill="#d05040"/><rect x="374.0" y="373.3" width="10.0" height="1.2" fill="#444" opacity="0.75"/><rect x="374.0" y="376.3" width="36.0" height="0.7" fill="#a0a4a8" opacity="0.5"/><rect x="374.0" y="379.1" width="34.0" height="0.7" fill="#a0a4a8" opacity="0.5"/><rect x="375.0" y="381.9" width="7.0" height="0.7" fill="#888" opacity="0.5"/><rect x="383.0" y="381.9" width="11.0" height="0.7" fill="#4080d0" opacity="0.7"/><rect x="374.0" y="385.3" width="12.0" height="0.8" fill="#666" opacity="0.6"/><rect x="374.0" y="387.1" width="38.0" height="0.5" fill="#d0d4d8"/><rect x="377.0" y="389.1" width="22.0" height="0.8" fill="#5090d8" opacity="0.65"/><rect x="404.0" y="389.1" width="2.0" height="0.8" fill="#888" opacity="0.5"/><rect x="408.0" y="389.1" width="2.0" height="0.8" fill="#888" opacity="0.5"/><rect x="350.0" y="392.9" width="70.4" height="2.6" fill="#e6edf5"/><rect x="362.0" y="393.5" width="22.0" height="1.2" fill="#2a60c8" opacity="0.8"/><rect x="386.0" y="393.6" width="10.0" height="1.0" fill="#555" opacity="0.6"/><rect x="406.0" y="393.6" width="6.0" height="0.9" fill="#8a9ab0" opacity="0.6"/><rect x="351.0" y="393.7" width="1.4" height="1.0" fill="#e08030"/><rect x="350.0" y="395.5" width="70.4" height="1.0" fill="#c4d2e2"/><rect x="436.1" y="357.3" width="71.0" height="40.1" fill="#000" rx="0.5" opacity="0.16"/><rect x="435.6" y="356.8" width="71.0" height="40.1" fill="#000" rx="0.5" opacity="0.14"/><rect x="435.3" y="356.4" width="71.0" height="40.1" fill="#fdfdfd"/><rect x="435.3" y="356.4" width="71.0" height="2.2" fill="#f1f2f4"/><rect x="435.3" y="358.6" width="71.0" height="2.6" fill="#f8f8f9"/><rect x="436.3" y="357.0" width="1.6" height="1.2" fill="#e8b840"/><rect x="451.3" y="357.4" width="50.0" height="0.5" fill="#d0d4d8"/><rect x="437.3" y="359.6" width="10.0" height="0.6" fill="#b0b4b8" opacity="0.6"/><rect x="457.3" y="359.6" width="40.0" height="0.6" fill="#c0c4c8" opacity="0.6"/><rect x="438.3" y="363.0" width="3.0" height="0.7" fill="#999" opacity="0.6"/><rect x="444.3" y="363.0" width="1.0" height="0.7" fill="#5090d0" opacity="0.6"/><rect x="459.3" y="363.0" width="14.0" height="0.7" fill="#aaa" opacity="0.6"/><rect x="473.3" y="363.0" width="9.0" height="0.7" fill="#888" opacity="0.6"/><rect x="501.3" y="363.0" width="3.0" height="0.7" fill="#aaa" opacity="0.6"/><rect x="449.7" y="361.4" width="0.3" height="34.1" fill="#e8e8ea"/><rect x="438.7" y="366.4" width="1.3" height="1.2" fill="#e08030" opacity="0.8"/><rect x="440.7" y="366.7" width="4.0" height="0.6" fill="#9a9ea4" opacity="0.55"/><rect x="438.7" y="368.5" width="1.3" height="1.2" fill="#4a90d8" opacity="0.8"/><rect x="440.7" y="368.8" width="7.0" height="0.6" fill="#9a9ea4" opacity="0.55"/><rect x="438.7" y="370.6" width="1.3" height="1.2" fill="#70b8e8" opacity="0.8"/><rect x="440.7" y="370.9" width="6.0" height="0.6" fill="#9a9ea4" opacity="0.55"/><rect x="438.7" y="374.8" width="1.3" height="1.2" fill="#60c0c0" opacity="0.8"/><rect x="440.7" y="375.1" width="4.0" height="0.6" fill="#9a9ea4" opacity="0.55"/><rect x="438.7" y="376.9" width="1.3" height="1.2" fill="#888" opacity="0.8"/><rect x="440.7" y="377.2" width="7.0" height="0.6" fill="#9a9ea4" opacity="0.55"/><rect x="438.7" y="381.1" width="1.3" height="1.2" fill="#4a80d0" opacity="0.8"/><rect x="440.7" y="381.4" width="5.0" height="0.6" fill="#9a9ea4" opacity="0.55"/><rect x="438.7" y="383.2" width="1.3" height="1.2" fill="#c03030" opacity="0.8"/><rect x="440.7" y="383.5" width="4.0" height="0.6" fill="#9a9ea4" opacity="0.55"/><rect x="438.7" y="385.3" width="1.3" height="1.2" fill="#8040d0" opacity="0.8"/><rect x="440.7" y="385.6" width="7.0" height="0.6" fill="#9a9ea4" opacity="0.55"/><rect x="436.3" y="389.4" width="12.6" height="2.2" fill="#d8dade" rx="0.4"/><rect x="437.3" y="390.2" width="8.0" height="0.7" fill="#667" opacity="0.6"/><rect x="451.6" y="366.4" width="1.3" height="1.1" fill="#e8b840"/><rect x="453.8" y="366.6" width="4.0" height="0.6" fill="#8a8e94" opacity="0.55"/><rect x="469.3" y="366.6" width="6.0" height="0.6" fill="#b8bcc0" opacity="0.6"/><rect x="480.3" y="366.6" width="3.0" height="0.6" fill="#b8bcc0" opacity="0.6"/><rect x="451.6" y="368.9" width="1.3" height="1.1" fill="#e8b840"/><rect x="453.8" y="369.1" width="9.0" height="0.6" fill="#8a8e94" opacity="0.55"/><rect x="469.3" y="369.1" width="6.0" height="0.6" fill="#b8bcc0" opacity="0.6"/><rect x="480.3" y="369.1" width="5.0" height="0.6" fill="#b8bcc0" opacity="0.6"/><rect x="451.6" y="371.5" width="1.3" height="1.1" fill="#e8b840"/><rect x="451.3" y="370.8" width="41.5" height="2.4" fill="#cfe4f8"/><rect x="451.6" y="371.5" width="1.3" height="1.1" fill="#e8b840"/><rect x="453.8" y="371.7" width="38.0" height="0.7" fill="#5a9ae0" opacity="0.55"/><rect x="453.8" y="374.2" width="5.0" height="0.6" fill="#8a8e94" opacity="0.55"/><rect x="469.3" y="374.2" width="6.0" height="0.6" fill="#b8bcc0" opacity="0.6"/><rect x="480.3" y="374.2" width="3.0" height="0.6" fill="#b8bcc0" opacity="0.6"/><rect x="453.8" y="376.8" width="10.0" height="0.6" fill="#8a8e94" opacity="0.55"/><rect x="469.3" y="376.8" width="6.0" height="0.6" fill="#b8bcc0" opacity="0.6"/><rect x="480.3" y="376.8" width="5.0" height="0.6" fill="#b8bcc0" opacity="0.6"/><rect x="453.8" y="381.9" width="6.0" height="0.6" fill="#8a8e94" opacity="0.55"/><rect x="469.3" y="381.9" width="6.0" height="0.6" fill="#b8bcc0" opacity="0.6"/><rect x="480.3" y="381.9" width="3.0" height="0.6" fill="#b8bcc0" opacity="0.6"/><rect x="453.8" y="387.0" width="9.0" height="0.6" fill="#8a8e94" opacity="0.55"/><rect x="469.3" y="387.0" width="6.0" height="0.6" fill="#b8bcc0" opacity="0.6"/><rect x="480.3" y="387.0" width="7.0" height="0.6" fill="#b8bcc0" opacity="0.6"/><rect x="453.8" y="389.5" width="7.0" height="0.6" fill="#8a8e94" opacity="0.55"/><rect x="469.3" y="389.5" width="6.0" height="0.6" fill="#b8bcc0" opacity="0.6"/><rect x="480.3" y="389.5" width="3.0" height="0.6" fill="#b8bcc0" opacity="0.6"/><rect x="453.8" y="392.1" width="5.0" height="0.6" fill="#8a8e94" opacity="0.55"/><rect x="469.3" y="392.1" width="6.0" height="0.6" fill="#b8bcc0" opacity="0.6"/><rect x="480.3" y="392.1" width="5.0" height="0.6" fill="#b8bcc0" opacity="0.6"/><rect x="489.3" y="366.4" width="1.2" height="0.8" fill="#ccc"/><rect x="491.3" y="376.4" width="1.4" height="0.7" fill="#bbb"/><rect x="522.4" y="357.3" width="70.8" height="40.1" fill="#000" rx="0.5" opacity="0.16"/><rect x="521.9" y="356.8" width="70.8" height="40.1" fill="#000" rx="0.5" opacity="0.14"/><rect x="521.6" y="356.4" width="70.8" height="40.1" fill="#f4f2ee"/><rect x="521.6" y="356.4" width="70.8" height="2.0" fill="#ebe9e5"/><rect x="536.6" y="356.7" width="45.0" height="0.8" fill="#d8d6d2" opacity="0.7"/><rect x="581.6" y="359.0" width="5.0" height="1.0" fill="#8a8884" opacity="0.6"/><rect x="521.6" y="358.4" width="2.2" height="38.1" fill="#efede9"/><rect x="522.2" y="361.4" width="1.0" height="1.0" fill="#aaa8a4" opacity="0.9"/><rect x="522.2" y="364.1" width="1.0" height="1.0" fill="#aaa8a4" opacity="0.6"/><rect x="522.2" y="366.8" width="1.0" height="1.0" fill="#aaa8a4" opacity="0.6"/><rect x="522.2" y="369.5" width="1.0" height="1.0" fill="#aaa8a4" opacity="0.9"/><rect x="522.2" y="372.2" width="1.0" height="1.0" fill="#aaa8a4" opacity="0.6"/><rect x="522.2" y="374.9" width="1.0" height="1.0" fill="#aaa8a4" opacity="0.6"/><rect x="522.2" y="377.6" width="1.0" height="1.0" fill="#aaa8a4" opacity="0.9"/><rect x="522.2" y="380.3" width="1.0" height="1.0" fill="#aaa8a4" opacity="0.6"/><rect x="522.2" y="383.0" width="1.0" height="1.0" fill="#aaa8a4" opacity="0.6"/><rect x="522.2" y="385.7" width="1.0" height="1.0" fill="#aaa8a4" opacity="0.9"/><rect x="522.2" y="388.4" width="1.0" height="1.0" fill="#aaa8a4" opacity="0.6"/><rect x="522.2" y="391.1" width="1.0" height="1.0" fill="#aaa8a4" opacity="0.6"/><rect x="522.1" y="392.9" width="1.6" height="1.8" fill="#3a2a20"/><rect x="559.2" y="361.0" width="25.6" height="29.0" fill="#f8f7f4" rx="0.6" stroke="#e4e2de" stroke-width=".4"/><rect x="565.6" y="361.9" width="5.0" height="0.8" fill="#777" opacity="0.6"/><rect x="576.6" y="361.9" width="2.0" height="0.8" fill="#999" opacity="0.6"/><rect x="580.6" y="361.9" width="1.0" height="0.8" fill="#999" opacity="0.6"/><rect x="561.0" y="363.8" width="9.0" height="0.7" fill="#4a4844" opacity="0.7"/><rect x="561.0" y="365.2" width="13.0" height="0.6" fill="#9a9894" opacity="0.6"/><rect x="561.0" y="366.6" width="13.0" height="0.7" fill="#4a4844" opacity="0.7"/><rect x="561.0" y="368.0" width="18.0" height="0.6" fill="#9a9894" opacity="0.6"/><rect x="561.0" y="370.0" width="11.0" height="0.7" fill="#4a4844" opacity="0.7"/><rect x="561.0" y="371.4" width="14.0" height="0.6" fill="#9a9894" opacity="0.6"/><rect x="561.0" y="373.6" width="9.0" height="0.7" fill="#4a4844" opacity="0.7"/><rect x="561.0" y="375.0" width="19.0" height="0.6" fill="#9a9894" opacity="0.6"/><rect x="561.0" y="377.6" width="13.0" height="0.7" fill="#4a4844" opacity="0.7"/><rect x="561.0" y="379.0" width="15.0" height="0.6" fill="#9a9894" opacity="0.6"/><rect x="582.1" y="377.4" width="0.8" height="0.8" fill="#888"/><rect x="538.2" y="371.8" width="21.0" height="1.3" fill="#3a3834" opacity="0.8"/><rect x="538.2" y="375.0" width="24.0" height="4.6" fill="#f9f8f6" rx="0.8" stroke="#e2e0dc" stroke-width=".4"/><rect x="539.6" y="376.0" width="17.0" height="0.6" fill="#b8b6b2" opacity="0.7"/><rect x="539.6" y="378.2" width="1.0" height="0.6" fill="#888"/><rect x="542.6" y="378.2" width="1.4" height="0.6" fill="#666"/><rect x="539.6" y="381.0" width="23.0" height="0.5" fill="#c8c6c2" opacity="0.7"/><rect x="586.0" y="360.4" width="0.3" height="35.1" fill="#e0deda"/><rect x="588.4" y="360.4" width="0.3" height="35.1" fill="#e6e4e0"/><rect x="589.1" y="362.0" width="1.0" height="1.0" fill="#999" opacity="0.6"/><rect x="586.6" y="364.4" width="1.0" height="0.8" fill="#aaa" opacity="0.6"/><rect x="608.1" y="353.5" width="71.0" height="43.4" fill="#000" rx="0.5" opacity="0.16"/><rect x="607.6" y="353.0" width="71.0" height="43.4" fill="#000" rx="0.5" opacity="0.14"/><rect x="607.3" y="352.6" width="71.0" height="43.4" fill="#91918f"/><rect x="607.3" y="352.6" width="71.0" height="3.4" fill="#f2f2f1"/><rect x="609.3" y="353.0" width="14.0" height="1.0" fill="#d8d8d6"/><rect x="615.3" y="354.7" width="26.0" height="0.9" fill="#dcdcda"/><rect x="643.3" y="354.6" width="4.0" height="1.0" fill="#b8b8b6"/><rect x="626.3" y="358.2" width="34.0" height="1.3" fill="#808080" opacity="0.8"/><rect x="615.3" y="359.8" width="55.0" height="34.0" fill="#8b8b89" opacity="0.6"/><rect x="617.3" y="361.6" width="8.0" height="0.9" fill="#6a6a68" opacity="0.7"/><rect x="617.3" y="364.1" width="9.0" height="0.7" fill="#b8b8b6" opacity="0.6"/><rect x="617.3" y="365.7" width="7.2" height="0.7" fill="#b8b8b6" opacity="0.6"/><rect x="617.9" y="367.6" width="8.0" height="0.7" fill="#d0d0ce" opacity="0.7"/><rect x="617.9" y="370.2" width="6.4" height="0.7" fill="#d0d0ce" opacity="0.7"/><rect x="617.3" y="373.0" width="8.5" height="0.7" fill="#c4c4c2" opacity="0.6"/><rect x="617.3" y="374.5" width="6.8" height="0.7" fill="#c4c4c2" opacity="0.6"/><rect x="617.3" y="376.0" width="7.8" height="0.7" fill="#c4c4c2" opacity="0.6"/><rect x="628.2" y="363.0" width="28.8" height="26.5" fill="#fbfbfa" rx="0.6"/><rect x="629.5" y="364.4" width="7.5" height="1.0" fill="#222" opacity="0.85"/><rect x="629.5" y="367.6" width="25.8" height="2.2" fill="#efefee" rx="0.3"/><rect x="630.3" y="368.3" width="5.0" height="0.7" fill="#888"/><rect x="629.5" y="371.1" width="8.0" height="0.6" fill="#999" opacity="0.7"/><rect x="629.6" y="373.0" width="1.6" height="2.3" fill="#5a5a60" rx="0.3"/><rect x="632.1" y="373.2" width="3.0" height="0.6" fill="#444" opacity="0.7"/><rect x="632.1" y="374.4" width="6.0" height="0.6" fill="#999" opacity="0.7"/><rect x="629.6" y="376.4" width="1.6" height="2.3" fill="#5a5a60" rx="0.3"/><rect x="632.1" y="376.6" width="5.0" height="0.6" fill="#444" opacity="0.7"/><rect x="632.1" y="377.8" width="7.3" height="0.6" fill="#999" opacity="0.7"/><rect x="629.6" y="379.7" width="1.6" height="2.3" fill="#5a5a60" rx="0.3"/><rect x="632.1" y="379.9" width="3.0" height="0.6" fill="#444" opacity="0.7"/><rect x="632.1" y="381.1" width="8.6" height="0.6" fill="#999" opacity="0.7"/><rect x="629.6" y="383.1" width="1.6" height="2.3" fill="#5a5a60" rx="0.3"/><rect x="632.1" y="383.3" width="5.0" height="0.6" fill="#444" opacity="0.7"/><rect x="632.1" y="384.5" width="9.9" height="0.6" fill="#999" opacity="0.7"/><rect x="642.1" y="385.8" width="6.6" height="2.0" fill="#1a1a1a" rx="0.4"/><rect x="650.8" y="385.8" width="4.6" height="2.0" fill="#f0f0ef" rx="0.4" stroke="#ddd" stroke-width=".3"/><rect x="659.9" y="373.2" width="8.2" height="1.9" fill="#252a44" rx="0.3"/></svg>
<div class="t" style="top:226.44px;font-size:9.4px;line-height:11px;color:#1a1a1a;left:299.10px;width:0;"><span class="ti" id="t24" style="transform:translateX(-50%) scaleX(1.0204)">Снимок экрана</span></div>
<div class="t" style="top:238.04px;font-size:9.4px;line-height:11px;color:#1a1a1a;left:299.10px;width:0;"><span class="ti" id="t25" style="transform:translateX(-50%) scaleX(1.0473)">2025-11-17</span></div>
<div class="t" style="top:251.24px;font-size:9.4px;line-height:11px;color:#1a1a1a;left:299.10px;width:0;"><span class="ti" id="t26" style="transform:translateX(-50%) scaleX(0.9937)">082810</span></div>
<div class="t" style="top:226.44px;font-size:9.4px;line-height:11px;color:#1a1a1a;left:385.00px;width:0;"><span class="ti" id="t27" style="transform:translateX(-50%) scaleX(1.0204)">Снимок экрана</span></div>
<div class="t" style="top:238.04px;font-size:9.4px;line-height:11px;color:#1a1a1a;left:385.00px;width:0;"><span class="ti" id="t28" style="transform:translateX(-50%) scaleX(1.0473)">2025-11-18</span></div>
<div class="t" style="top:251.24px;font-size:9.4px;line-height:11px;color:#1a1a1a;left:385.00px;width:0;"><span class="ti" id="t29" style="transform:translateX(-50%) scaleX(0.9937)">105042</span></div>
<div class="t" style="top:226.44px;font-size:9.4px;line-height:11px;color:#1a1a1a;left:470.90px;width:0;"><span class="ti" id="t30" style="transform:translateX(-50%) scaleX(1.0204)">Снимок экрана</span></div>
<div class="t" style="top:238.04px;font-size:9.4px;line-height:11px;color:#1a1a1a;left:470.90px;width:0;"><span class="ti" id="t31" style="transform:translateX(-50%) scaleX(1.0473)">2025-11-18</span></div>
<div class="t" style="top:251.24px;font-size:9.4px;line-height:11px;color:#1a1a1a;left:470.90px;width:0;"><span class="ti" id="t32" style="transform:translateX(-50%) scaleX(0.9937)">210206</span></div>
<div class="t" style="top:226.44px;font-size:9.4px;line-height:11px;color:#1a1a1a;left:557.00px;width:0;"><span class="ti" id="t33" style="transform:translateX(-50%) scaleX(1.0204)">Снимок экрана</span></div>
<div class="t" style="top:238.04px;font-size:9.4px;line-height:11px;color:#1a1a1a;left:557.00px;width:0;"><span class="ti" id="t34" style="transform:translateX(-50%) scaleX(1.0473)">2025-11-18</span></div>
<div class="t" style="top:251.24px;font-size:9.4px;line-height:11px;color:#1a1a1a;left:557.00px;width:0;"><span class="ti" id="t35" style="transform:translateX(-50%) scaleX(0.9937)">210431</span></div>
<div class="t" style="top:226.44px;font-size:9.4px;line-height:11px;color:#1a1a1a;left:642.80px;width:0;"><span class="ti" id="t36" style="transform:translateX(-50%) scaleX(1.0204)">Снимок экрана</span></div>
<div class="t" style="top:238.04px;font-size:9.4px;line-height:11px;color:#1a1a1a;left:642.80px;width:0;"><span class="ti" id="t37" style="transform:translateX(-50%) scaleX(1.0473)">2025-11-18</span></div>
<div class="t" style="top:251.24px;font-size:9.4px;line-height:11px;color:#1a1a1a;left:642.80px;width:0;"><span class="ti" id="t38" style="transform:translateX(-50%) scaleX(1.0165)">211022</span></div>
<div class="t" style="top:226.44px;font-size:9.4px;line-height:11px;color:#1a1a1a;left:729.20px;width:0;"><span class="ti" id="t39" style="transform:translateX(-50%) scaleX(1.0204)">Снимок экрана</span></div>
<div class="t" style="top:238.04px;font-size:9.4px;line-height:11px;color:#1a1a1a;left:729.20px;width:0;"><span class="ti" id="t40" style="transform:translateX(-50%) scaleX(1.0473)">2025-11-18</span></div>
<div class="t" style="top:251.24px;font-size:9.4px;line-height:11px;color:#1a1a1a;left:729.20px;width:0;"><span class="ti" id="t41" style="transform:translateX(-50%) scaleX(0.9937)">224316</span></div>
<div class="t" style="top:226.44px;font-size:9.4px;line-height:11px;color:#1a1a1a;left:815.20px;width:0;"><span class="ti" id="t42" style="transform:translateX(-50%) scaleX(1.0204)">Снимок экрана</span></div>
<div class="t" style="top:238.04px;font-size:9.4px;line-height:11px;color:#1a1a1a;left:815.20px;width:0;"><span class="ti" id="t43" style="transform:translateX(-50%) scaleX(1.0473)">2025-11-18</span></div>
<div class="t" style="top:251.24px;font-size:9.4px;line-height:11px;color:#1a1a1a;left:815.20px;width:0;"><span class="ti" id="t44" style="transform:translateX(-50%) scaleX(0.9937)">224830</span></div>
<div class="t" style="top:226.44px;font-size:9.4px;line-height:11px;color:#1a1a1a;left:901.20px;width:0;"><span class="ti" id="t45" style="transform:translateX(-50%) scaleX(1.0204)">Снимок экрана</span></div>
<div class="t" style="top:238.04px;font-size:9.4px;line-height:11px;color:#1a1a1a;left:901.20px;width:0;"><span class="ti" id="t46" style="transform:translateX(-50%) scaleX(1.0473)">2025-11-18</span></div>
<div class="t" style="top:251.24px;font-size:9.4px;line-height:11px;color:#1a1a1a;left:901.20px;width:0;"><span class="ti" id="t47" style="transform:translateX(-50%) scaleX(0.9937)">225635</span></div>
<div class="t" style="top:309.14px;font-size:9.4px;line-height:11px;color:#1a1a1a;left:299.10px;width:0;"><span class="ti" id="t48" style="transform:translateX(-50%) scaleX(1.0204)">Снимок экрана</span></div>
<div class="t" style="top:321.54px;font-size:9.4px;line-height:11px;color:#1a1a1a;left:299.10px;width:0;"><span class="ti" id="t49" style="transform:translateX(-50%) scaleX(1.0473)">2025-11-18</span></div>
<div class="t" style="top:333.94px;font-size:9.4px;line-height:11px;color:#1a1a1a;left:299.10px;width:0;"><span class="ti" id="t50" style="transform:translateX(-50%) scaleX(0.9937)">230040</span></div>
<div class="t" style="top:309.14px;font-size:9.4px;line-height:11px;color:#1a1a1a;left:385.00px;width:0;"><span class="ti" id="t51" style="transform:translateX(-50%) scaleX(1.0204)">Снимок экрана</span></div>
<div class="t" style="top:321.54px;font-size:9.4px;line-height:11px;color:#1a1a1a;left:385.00px;width:0;"><span class="ti" id="t52" style="transform:translateX(-50%) scaleX(1.0473)">2025-11-18</span></div>
<div class="t" style="top:333.94px;font-size:9.4px;line-height:11px;color:#1a1a1a;left:385.00px;width:0;"><span class="ti" id="t53" style="transform:translateX(-50%) scaleX(0.9937)">230054</span></div>
<div class="t" style="top:309.14px;font-size:9.4px;line-height:11px;color:#1a1a1a;left:470.90px;width:0;"><span class="ti" id="t54" style="transform:translateX(-50%) scaleX(1.0204)">Снимок экрана</span></div>
<div class="t" style="top:321.54px;font-size:9.4px;line-height:11px;color:#1a1a1a;left:470.90px;width:0;"><span class="ti" id="t55" style="transform:translateX(-50%) scaleX(1.0473)">2025-11-18</span></div>
<div class="t" style="top:333.94px;font-size:9.4px;line-height:11px;color:#1a1a1a;left:470.90px;width:0;"><span class="ti" id="t56" style="transform:translateX(-50%) scaleX(0.9937)">230121</span></div>
<div class="t" style="top:309.14px;font-size:9.4px;line-height:11px;color:#1a1a1a;left:557.00px;width:0;"><span class="ti" id="t57" style="transform:translateX(-50%) scaleX(1.0204)">Снимок экрана</span></div>
<div class="t" style="top:321.54px;font-size:9.4px;line-height:11px;color:#1a1a1a;left:557.00px;width:0;"><span class="ti" id="t58" style="transform:translateX(-50%) scaleX(1.0473)">2025-11-18</span></div>
<div class="t" style="top:333.94px;font-size:9.4px;line-height:11px;color:#1a1a1a;left:557.00px;width:0;"><span class="ti" id="t59" style="transform:translateX(-50%) scaleX(0.9937)">230632</span></div>
<div class="t" style="top:309.14px;font-size:9.4px;line-height:11px;color:#1a1a1a;left:642.80px;width:0;"><span class="ti" id="t60" style="transform:translateX(-50%) scaleX(1.0204)">Снимок экрана</span></div>
<div class="t" style="top:321.54px;font-size:9.4px;line-height:11px;color:#1a1a1a;left:642.80px;width:0;"><span class="ti" id="t61" style="transform:translateX(-50%) scaleX(1.0473)">2025-11-18</span></div>
<div class="t" style="top:333.94px;font-size:9.4px;line-height:11px;color:#1a1a1a;left:642.80px;width:0;"><span class="ti" id="t62" style="transform:translateX(-50%) scaleX(0.9937)">230813</span></div>
<div class="t" style="top:309.14px;font-size:9.4px;line-height:11px;color:#1a1a1a;left:729.20px;width:0;"><span class="ti" id="t63" style="transform:translateX(-50%) scaleX(1.0204)">Снимок экрана</span></div>
<div class="t" style="top:321.54px;font-size:9.4px;line-height:11px;color:#1a1a1a;left:729.20px;width:0;"><span class="ti" id="t64" style="transform:translateX(-50%) scaleX(1.0319)">2025-12-09</span></div>
<div class="t" style="top:333.94px;font-size:9.4px;line-height:11px;color:#1a1a1a;left:729.20px;width:0;"><span class="ti" id="t65" style="transform:translateX(-50%) scaleX(0.9937)">230641</span></div>
<div class="t" style="top:309.14px;font-size:9.4px;line-height:11px;color:#1a1a1a;left:815.20px;width:0;"><span class="ti" id="t66" style="transform:translateX(-50%) scaleX(1.0204)">Снимок экрана</span></div>
<div class="t" style="top:321.54px;font-size:9.4px;line-height:11px;color:#1a1a1a;left:815.20px;width:0;"><span class="ti" id="t67" style="transform:translateX(-50%) scaleX(1.0319)">2025-12-09</span></div>
<div class="t" style="top:333.94px;font-size:9.4px;line-height:11px;color:#1a1a1a;left:815.20px;width:0;"><span class="ti" id="t68" style="transform:translateX(-50%) scaleX(0.9937)">230843</span></div>
<div class="t" style="top:309.14px;font-size:9.4px;line-height:11px;color:#1a1a1a;left:901.20px;width:0;"><span class="ti" id="t69" style="transform:translateX(-50%) scaleX(1.0204)">Снимок экрана</span></div>
<div class="t" style="top:321.54px;font-size:9.4px;line-height:11px;color:#1a1a1a;left:901.20px;width:0;"><span class="ti" id="t70" style="transform:translateX(-50%) scaleX(1.0319)">2025-12-23</span></div>
<div class="t" style="top:333.94px;font-size:9.4px;line-height:11px;color:#1a1a1a;left:901.20px;width:0;"><span class="ti" id="t71" style="transform:translateX(-50%) scaleX(0.9937)">125633</span></div>
<div class="t" style="top:400.94px;font-size:9.4px;line-height:11px;color:#1a1a1a;left:299.10px;width:0;"><span class="ti" id="t72" style="transform:translateX(-50%) scaleX(1.0204)">Снимок экрана</span></div>
<div class="t" style="top:413.34px;font-size:9.4px;line-height:11px;color:#1a1a1a;left:299.10px;width:0;"><span class="ti" id="t73" style="transform:translateX(-50%) scaleX(1.0319)">2025-12-23</span></div>
<div class="t" style="top:425.74px;font-size:9.4px;line-height:11px;color:#1a1a1a;left:299.10px;width:0;"><span class="ti" id="t74" style="transform:translateX(-50%) scaleX(0.9937)">131022</span></div>
<div class="t" style="top:400.94px;font-size:9.4px;line-height:11px;color:#1a1a1a;left:385.00px;width:0;"><span class="ti" id="t75" style="transform:translateX(-50%) scaleX(1.0204)">Снимок экрана</span></div>
<div class="t" style="top:413.34px;font-size:9.4px;line-height:11px;color:#1a1a1a;left:385.00px;width:0;"><span class="ti" id="t76" style="transform:translateX(-50%) scaleX(1.0319)">2026-01-25</span></div>
<div class="t" style="top:425.74px;font-size:9.4px;line-height:11px;color:#1a1a1a;left:385.00px;width:0;"><span class="ti" id="t77" style="transform:translateX(-50%) scaleX(0.9937)">173120</span></div>
<div class="t" style="top:400.94px;font-size:9.4px;line-height:11px;color:#1a1a1a;left:470.90px;width:0;"><span class="ti" id="t78" style="transform:translateX(-50%) scaleX(1.0204)">Снимок экрана</span></div>
<div class="t" style="top:413.34px;font-size:9.4px;line-height:11px;color:#1a1a1a;left:470.90px;width:0;"><span class="ti" id="t79" style="transform:translateX(-50%) scaleX(1.0319)">2026-02-05</span></div>
<div class="t" style="top:425.74px;font-size:9.4px;line-height:11px;color:#1a1a1a;left:470.90px;width:0;"><span class="ti" id="t80" style="transform:translateX(-50%) scaleX(0.9937)">143133</span></div>
<div class="t" style="top:400.94px;font-size:9.4px;line-height:11px;color:#1a1a1a;left:557.00px;width:0;"><span class="ti" id="t81" style="transform:translateX(-50%) scaleX(1.0204)">Снимок экрана</span></div>
<div class="t" style="top:413.34px;font-size:9.4px;line-height:11px;color:#1a1a1a;left:557.00px;width:0;"><span class="ti" id="t82" style="transform:translateX(-50%) scaleX(1.0319)">2026-03-04</span></div>
<div class="t" style="top:425.74px;font-size:9.4px;line-height:11px;color:#1a1a1a;left:557.00px;width:0;"><span class="ti" id="t83" style="transform:translateX(-50%) scaleX(0.9937)">220426</span></div>
<div class="t" style="top:400.94px;font-size:9.4px;line-height:11px;color:#1a1a1a;left:642.80px;width:0;"><span class="ti" id="t84" style="transform:translateX(-50%) scaleX(1.0204)">Снимок экрана</span></div>
<div class="t" style="top:413.34px;font-size:9.4px;line-height:11px;color:#1a1a1a;left:642.80px;width:0;"><span class="ti" id="t85" style="transform:translateX(-50%) scaleX(1.0319)">2026-03-04</span></div>
<div class="t" style="top:425.74px;font-size:9.4px;line-height:11px;color:#1a1a1a;left:642.80px;width:0;"><span class="ti" id="t86" style="transform:translateX(-50%) scaleX(0.9937)">221050</span></div>
<svg width="1000" height="610" viewBox="0 0 1000 610" style="left:0;top:0"><path d="M81 85.2 q0 -1.2 1.2 -1.2 h2.6 q.8 0 1.3 .6 l.8 .8 h4.1 q1.2 0 1.2 1.2 v4.6 q0 1 -1 1 h-9.2 q-1 0 -1 -1z" fill="#f2cf5e"/><path d="M81 87 h11.2 v4.2 q0 1 -1 1 h-9.2 q-1 0 -1 -1z" fill="#f6d978"/><path d="M241.8 85.4 l5.6 5.6 M247.4 85.4 l-5.6 5.6" stroke="#2a2a2a" stroke-width=".9" fill="none"/><path d="M275 88.4 h7.2 M278.6 84.8 v7.2" stroke="#3a3a3a" stroke-width=".9" fill="none"/><path d="M853.6 80.7 h8" stroke="#7a7a7a" stroke-width=".9"/><rect x="889.2" y="76.8" width="7.8" height="7.8" rx="1.2" fill="none" stroke="#6a6a6a" stroke-width=".9"/><path d="M926.3 77.2 l7.2 7.6 M933.5 77.2 l-7.2 7.6" stroke="#6a6a6a" stroke-width=".9" fill="none"/><path d="M93 119.3 h-9 M88.6 114.5 l-4.8 4.8 l4.8 4.8" stroke="#2a2a2a" stroke-width="1" fill="none" stroke-linecap="round" stroke-linejoin="round"/><path d="M121 119.3 h9.8 M126.2 114.6 l4.7 4.7 l-4.7 4.7" stroke="#b4b4b2" stroke-width="1" fill="none" stroke-linecap="round" stroke-linejoin="round"/><path d="M163.2 124 v-8.8 M158.8 119.4 l4.4 -4.4 l4.4 4.4" stroke="#2a2a2a" stroke-width="1" fill="none" stroke-linecap="round" stroke-linejoin="round"/><path d="M205.3 118 a4.6 4.6 0 1 1 -1.6 -2.6 M205.6 113.6 v3 h-3" stroke="#3a3a3a" stroke-width="1" fill="none" stroke-linecap="round" stroke-linejoin="round"/><path d="M237.6 121.6 h-1.4 a2.6 2.6 0 0 1 -.3 -5.2 a3.9 3.9 0 0 1 7.5 -.4 a2.6 2.6 0 0 1 1.6 .9" stroke="#1a6fd0" stroke-width="1" fill="none" stroke-linecap="round"/><circle cx="241.6" cy="120.6" r="3.8" fill="#1a6fd0"/><path d="M241.6 122.8 v-4 M240 120.2 l1.6 -1.6 l1.6 1.6" stroke="#fff" stroke-width=".9" fill="none" stroke-linecap="round" stroke-linejoin="round"/><path d="M347.8 116 l3.2 3.4 l-3.2 3.4" stroke="#4a4a4a" stroke-width=".9" fill="none" stroke-linecap="round" stroke-linejoin="round"/><path d="M450.2 116 l3.2 3.4 l-3.2 3.4" stroke="#4a4a4a" stroke-width=".9" fill="none" stroke-linecap="round" stroke-linejoin="round"/><circle cx="924" cy="118.8" r="2.9" fill="none" stroke="#4a4a4a" stroke-width=".9"/><path d="M926.2 121.2 l2.8 2.8" stroke="#4a4a4a" stroke-width=".9" stroke-linecap="round"/><circle cx="87.2" cy="157.5" r="5.5" fill="none" stroke="#5a5a5a" stroke-width=".9"/><path d="M84.8 157.5 h4.8 M87.2 155.1 v4.8" stroke="#1a8ae0" stroke-width="1.1" stroke-linecap="round"/><path d="M138.9 156.8 l2.1 2.1 l2.1 -2.1" stroke="#5a5a5a" stroke-width=".8" fill="none" stroke-linecap="round" stroke-linejoin="round"/><path d="M478.5 156.8 l2.1 2.1 l2.1 -2.1" stroke="#5a5a5a" stroke-width=".8" fill="none" stroke-linecap="round" stroke-linejoin="round"/><path d="M586.5 156.8 l2.1 2.1 l2.1 -2.1" stroke="#5a5a5a" stroke-width=".8" fill="none" stroke-linecap="round" stroke-linejoin="round"/><path d="M174.2 152.2 l5.2 8 M181.8 152.2 l-5.2 8" stroke="#4a4a4a" stroke-width=".9" fill="none" stroke-linecap="round"/><ellipse cx="175.2" cy="161.9" rx="2.4" ry="1.7" fill="none" stroke="#1a7fd8" stroke-width="1"/><ellipse cx="180.8" cy="161.9" rx="2.4" ry="1.7" fill="none" stroke="#1a7fd8" stroke-width="1"/><path d="M213.6 154.6 h-2 q-1.4 0 -1.4 1.4 v6 q0 1.4 1.4 1.4 h4 q1.4 0 1.4 -1.4 v-.6" stroke="#5a5a5a" stroke-width=".9" fill="none"/><rect x="214.6" y="152.4" width="5.8" height="8.2" rx="1.2" fill="none" stroke="#1a7fd8" stroke-width=".9"/><g opacity=".33"><path d="M251.5 163.4 h-3 q-1.2 0 -1.2 -1.2 v-7.6 q0 -1.2 1.2 -1.2 h7.4 q1.2 0 1.2 1.2" stroke="#5a5a5a" stroke-width=".9" fill="none"/><rect x="249.8" y="152.2" width="4" height="1.8" rx=".8" fill="none" stroke="#5a5a5a" stroke-width=".8"/><rect x="252.6" y="155.6" width="5.8" height="7.8" rx="1" fill="none" stroke="#1a7fd8" stroke-width=".9"/></g><path d="M291.2 153.2 h-5.2 q-1.5 0 -1.5 1.5 v6.2 q0 1.5 1.5 1.5 h5.2 M294.4 153.2 h1 q1.5 0 1.5 1.5 v6.2 q0 1.5 -1.5 1.5 h-1" stroke="#5a5a5a" stroke-width=".9" fill="none"/><path d="M292.8 151 v13 M291.6 151 h2.4 M291.6 164 h2.4" stroke="#1a7fd8" stroke-width=".9" fill="none"/><path d="M286.4 160.2 l2.1 -4.8 l2.1 4.8 M287.1 158.6 h2.8" stroke="#1a7fd8" stroke-width=".9" fill="none" stroke-linejoin="round"/><path d="M327.6 153.6 h-3 q-1.7 0 -1.7 1.7 v6.4 q0 1.7 1.7 1.7 h6.2 q1.7 0 1.7 -1.7 v-1.4" stroke="#5a5a5a" stroke-width=".9" fill="none" stroke-linecap="round"/><path d="M325.8 160.2 q.4 -3.8 4.8 -4 v-2 l3.6 3.2 l-3.6 3.2 v-2 q-3 -.1 -4.8 1.6z" stroke="#1a7fd8" stroke-width=".9" fill="none" stroke-linejoin="round"/><path d="M360.2 153.6 h10.8 M363.8 153.4 q0 -1.6 1.8 -1.6 q1.8 0 1.8 1.6 M361.3 153.8 l.9 8.6 q.1 1.3 1.4 1.3 h4 q1.3 0 1.4 -1.3 l.9 -8.6 M364.5 156.2 v5 M366.7 156.2 v5" stroke="#5a5a5a" stroke-width=".9" fill="none" stroke-linecap="round"/><path d="M386.5 147.5 v21" stroke="#e2e2df" stroke-width=".9"/><path d="M604.8 147.5 v21" stroke="#e2e2df" stroke-width=".9"/><path d="M402.5 161.6 v-8.4 M399.8 155.9 l2.7 -2.8 l2.7 2.8" stroke="#6a6a6a" stroke-width=".9" fill="none" stroke-linecap="round" stroke-linejoin="round"/><path d="M408.5 153 v9.4 M405.6 159.5 l2.9 3 l2.9 -3" stroke="#1a7fd8" stroke-width="1" fill="none" stroke-linecap="round" stroke-linejoin="round"/><rect x="507.4" y="153.7" width="9" height="7" rx="1.1" fill="none" stroke="#5a5a5a" stroke-width=".9"/><path d="M507 162.5 h9.8" stroke="#5a5a5a" stroke-width=".9"/><path d="M626.4 153.7 h3.8 q1.4 0 1.4 1.4 v5.2 q0 1.4 -1.4 1.4 h-9.4 q-1.4 0 -1.4 -1.4 v-1.6" stroke="#5a5a5a" stroke-width=".9" fill="none"/><path d="M620 160 q4 -3.4 11 -.6" stroke="#5a5a5a" stroke-width=".8" fill="none"/><rect x="618.9" y="151.4" width="7.2" height="7.2" rx="1.6" fill="#1a78d6"/><path d="M620.6 157 q1.8 -2.8 4 -.2 M622.6 153.6 a.8 .8 0 1 0 .1 0" stroke="#cfe6fa" stroke-width=".8" fill="none"/><circle cx="785.4" cy="157.6" r="1.25" fill="#1a1a1a"/><circle cx="790.4" cy="157.6" r="1.25" fill="#1a1a1a"/><circle cx="795.4" cy="157.6" r="1.25" fill="#1a1a1a"/><path d="M878.6 153.4 h-6 q-1.5 0 -1.5 1.5 v6 q0 1.5 1.5 1.5 h6" stroke="#5a5a5a" stroke-width=".9" fill="none"/><path d="M878.6 153.4 h3.4 q1.5 0 1.5 1.5 v6 q0 1.5 -1.5 1.5 h-3.4z" stroke="#1a7fd8" stroke-width=".9" fill="#dcecfa"/><path d="M880 155.8 h2 M880 157.9 h2 M880 160 h2" stroke="#1a7fd8" stroke-width=".7"/><path d="M95.6 192.4 v5.2 q0 1 1 1 h2.2 v-3.4 h2.8 v3.4 h2.2 q1 0 1 -1 v-5.2 l-4.6 -3.6z" fill="#b4b2b0"/><path d="M96 193.2 h8.4 v1.2 h-8.4z" fill="#9a9896" opacity=".5"/><path d="M93.8 193.6 l6.4 -5.6 l6.4 5.6" stroke="#e4602c" stroke-width="1.5" fill="none" stroke-linecap="round" stroke-linejoin="round"/><path d="M97 190.6 l3.2 -2.7 l3.2 2.7" stroke="#f2a23a" stroke-width="1.1" fill="none" stroke-linecap="round" stroke-linejoin="round"/><rect x="95.8" y="213.6" width="11" height="10" rx="1.2" fill="#1f5fb4"/><rect x="94.2" y="212" width="10.8" height="10.2" rx="1.3" fill="#2e8ee6"/><path d="M94.4 221.2 l3.8 -4.4 l2.4 2.6 l1.4 -1.4 l3 3.2 v0 q0 1 -1 1 h-8.6 q-1 0 -1 -1z" fill="#f4f8fc"/><circle cx="102" cy="214.6" r="1" fill="#f4f8fc"/><path d="M96.800 246.800 a2.900 2.900 0 0 1 -.3 -5.700 a4 3.600 0 0 1 7.600 -.4 a3.100 3.100 0 0 1 -.2 6.100z" fill="#1a6cd8"/><path d="M96.800 246.800 a2.900 2.900 0 0 1 -.3 -5.700 q1.500 -.2 2.500 .8 l1.500 3 l-1.500 1.900z" fill="#1450b8"/><path d="M99 246.800 a2.600 2.600 0 0 1 .6 -4.400 a3.200 3.200 0 0 1 4.600 -.6 a2.700 2.700 0 0 1 -.3 5z" fill="#3aa4f2"/><path d="M80.2 240.8 l2.400 2.400 l-2.400 2.400" stroke="#787878" stroke-width="0.8" fill="none" stroke-linecap="round" stroke-linejoin="round"/><path d="M85.6 491.2 l2.400 2.400 l-2.400 2.400" stroke="#787878" stroke-width="0.8" fill="none" stroke-linecap="round" stroke-linejoin="round"/><path d="M85.6 516.2 l2.400 2.400 l-2.400 2.400" stroke="#787878" stroke-width="0.8" fill="none" stroke-linecap="round" stroke-linejoin="round"/><path d="M85.6 541.2 l2.400 2.400 l-2.400 2.400" stroke="#787878" stroke-width="0.8" fill="none" stroke-linecap="round" stroke-linejoin="round"/><path d="M78.4 467.4 l2.6 2.6 l2.6 -2.6" stroke="#1a1a1a" stroke-width="1.3" fill="none" stroke-linecap="round" stroke-linejoin="round"/><linearGradient id="gd" x1="0" y1="0" x2="1" y2="1"><stop offset="0" stop-color="#3cc0d8"/><stop offset="1" stop-color="#1f78c8"/></linearGradient><rect x="93.6" y="288.4" width="12.8" height="9.4" rx="1.2" fill="url(#gd)"/><path d="M94 296 h12 v.8 q0 1 -1 1 h-10 q-1 0 -1 -1z" fill="#1a5aa8" opacity=".7"/><path d="M100.1 313 v8.2 M96.7 318.2 l3.4 3.3 l3.4 -3.3" stroke="#2fb08a" stroke-width=".9" fill="none" stroke-linecap="round" stroke-linejoin="round"/><path d="M96 323.4 h8.2" stroke="#2fa07a" stroke-width=".9"/><rect x="96" y="337.4" width="8.8" height="11" rx="1" fill="#9fb2c6"/><rect x="97.2" y="339" width="6.4" height="5.6" fill="#d4dde8"/><path d="M98 340.6 h2 M98 342.4 h4.6" stroke="#8aa0b8" stroke-width=".7"/><path d="M97.4 346.4 h6" stroke="#c4d0de" stroke-width=".7"/><rect x="94.6" y="363" width="11.1" height="10.6" rx="1.3" fill="#2e92e6"/><path d="M94.8 372.4 l3.6 -4.6 l2.6 2.8 l1.2 -1.2 l3.3 3.4 q0 .8 -1 .8 h-8.7 q-1 0 -1 -1z" fill="#f6fafd"/><circle cx="102.6" cy="365.6" r=".9" fill="#f6fafd"/><linearGradient id="gm" x1="0" y1="0" x2="1" y2="1"><stop offset="0" stop-color="#ee8a5a"/><stop offset="1" stop-color="#d8506a"/></linearGradient><circle cx="99.9" cy="393.3" r="5.8" fill="url(#gm)"/><path d="M98.600 396.000 v-5.400 l3.800 -1 v5.200" stroke="#fdf4f0" stroke-width=".9" fill="none"/><circle cx="97.8" cy="396" r="1.1" fill="#fdf4f0"/><circle cx="101.6" cy="395" r="1.1" fill="#fdf4f0"/><rect x="94.6" y="412.2" width="11.1" height="12.4" rx="1.4" fill="#a25fe6"/><path d="M96.2 412.4 v12 M104.100 412.400 v12" stroke="#5a2ec0" stroke-width="1.2" stroke-dasharray="1.2 1.2"/><path d="M98.600 415.800 l3.800 2.600 l-3.800 2.600z" fill="#f4ecfd"/><g transform="translate(224.600 293.0) rotate(45)"><path d="M-2.300 -3.600 h4.600 l-.6 1 v2.600 l1.500 1.600 h-6.400 l1.500 -1.600 v-2.600z" fill="#8497a8"/><path d="M0 1.600 v3.200" stroke="#8497a8" stroke-width=".8"/></g><g transform="translate(224.600 318.0) rotate(45)"><path d="M-2.300 -3.600 h4.600 l-.6 1 v2.600 l1.500 1.600 h-6.400 l1.500 -1.600 v-2.600z" fill="#8497a8"/><path d="M0 1.600 v3.200" stroke="#8497a8" stroke-width=".8"/></g><g transform="translate(224.600 343.0) rotate(45)"><path d="M-2.300 -3.600 h4.600 l-.6 1 v2.600 l1.500 1.600 h-6.400 l1.500 -1.600 v-2.600z" fill="#8497a8"/><path d="M0 1.600 v3.200" stroke="#8497a8" stroke-width=".8"/></g><g transform="translate(224.600 368.0) rotate(45)"><path d="M-2.300 -3.600 h4.600 l-.6 1 v2.600 l1.500 1.600 h-6.400 l1.500 -1.600 v-2.600z" fill="#8497a8"/><path d="M0 1.600 v3.200" stroke="#8497a8" stroke-width=".8"/></g><g transform="translate(224.600 393.0) rotate(45)"><path d="M-2.300 -3.600 h4.600 l-.6 1 v2.600 l1.500 1.600 h-6.400 l1.500 -1.600 v-2.600z" fill="#8497a8"/><path d="M0 1.600 v3.200" stroke="#8497a8" stroke-width=".8"/></g><g transform="translate(224.600 418.0) rotate(45)"><path d="M-2.300 -3.600 h4.600 l-.6 1 v2.600 l1.500 1.600 h-6.400 l1.500 -1.600 v-2.600z" fill="#8497a8"/><path d="M0 1.600 v3.200" stroke="#8497a8" stroke-width=".8"/></g><linearGradient id="gp" x1="0" y1="0" x2="1" y2="1"><stop offset="0" stop-color="#3cc4d4"/><stop offset="1" stop-color="#2378d0"/></linearGradient><rect x="94.6" y="463.2" width="11.4" height="8" rx="1" fill="url(#gp)"/><rect x="94.6" y="463.2" width="11.4" height="8" rx="1" fill="none" stroke="#2a6a9a" stroke-width=".5" opacity=".6"/><path d="M99.300 471.200 h2 v1.500 h1.600 v1 h-5.200 v-1 h1.600z" fill="#8a9096"/><rect x="101" y="492.9" width="10.200" height="2.900" rx=".7" fill="#2e2e30"/><path d="M100.300 487.9 h1.900 v1.900 h-1.900z M102.600 487.9 h1.900 v1.900 h-1.900z M100.300 490.2 h1.900 v1.900 h-1.900z M102.600 490.2 h1.900 v1.900 h-1.900z" fill="#1a78d8"/><rect x="101" y="517.6" width="10.200" height="2.900" rx=".7" fill="#2e2e30"/><path d="M106.500 517.6 l4 -2.600 v2.600z" fill="#c8c8c6"/><rect x="107.500" y="514.2" width="3.400" height="2.400" fill="#dadad8"/><path d="M911 552.500 h10 M911 554.900 h10 M911 557.100 h10 M911 559.500 h10" stroke="#87817c" stroke-width=".9"/><rect x="925.700" y="546.500" width="19.600" height="19" fill="#e4f1fc" stroke="#62b2f2" stroke-width="1"/><rect x="931.600" y="552.200" width="9" height="6.800" fill="#fdfdfc" stroke="#c8c8c6" stroke-width=".5"/><path d="M940.700 552.200 v6.900 h-9" stroke="#4a4a4a" stroke-width=".9" fill="none"/><path d="M932.200 560.700 h8.600" stroke="#969694" stroke-width="1.200"/></svg>
<div class="a" style="left:67px;top:530px;width:164px;height:15.300px;overflow:hidden"><svg width="164" height="20" viewBox="67 530 164 20" style="left:0;top:0"><rect x="101" y="542.600" width="10.200" height="2.900" rx=".7" fill="#2e2e30"/></svg>
<div class="t" id="t87" style="top:8.44px;font-size:9.4px;line-height:11px;color:#1a1a1a;left:46.85px;transform-origin:0 50%;transform:scaleX(0.9909);">Сетевой диск (Z:)</div></div>
<svg width="1000" height="610" viewBox="0 0 1000 610" style="left:0;top:0"><path d="M338.300 240.200 v13 l3 -2.700 l2.100 4.700 l1.800 -.8 l-2.100 -4.600 h4.300z" fill="#fdfdfd" stroke="#5a5a5a" stroke-width=".8" stroke-linejoin="round"/></svg>
</div></body></html>
